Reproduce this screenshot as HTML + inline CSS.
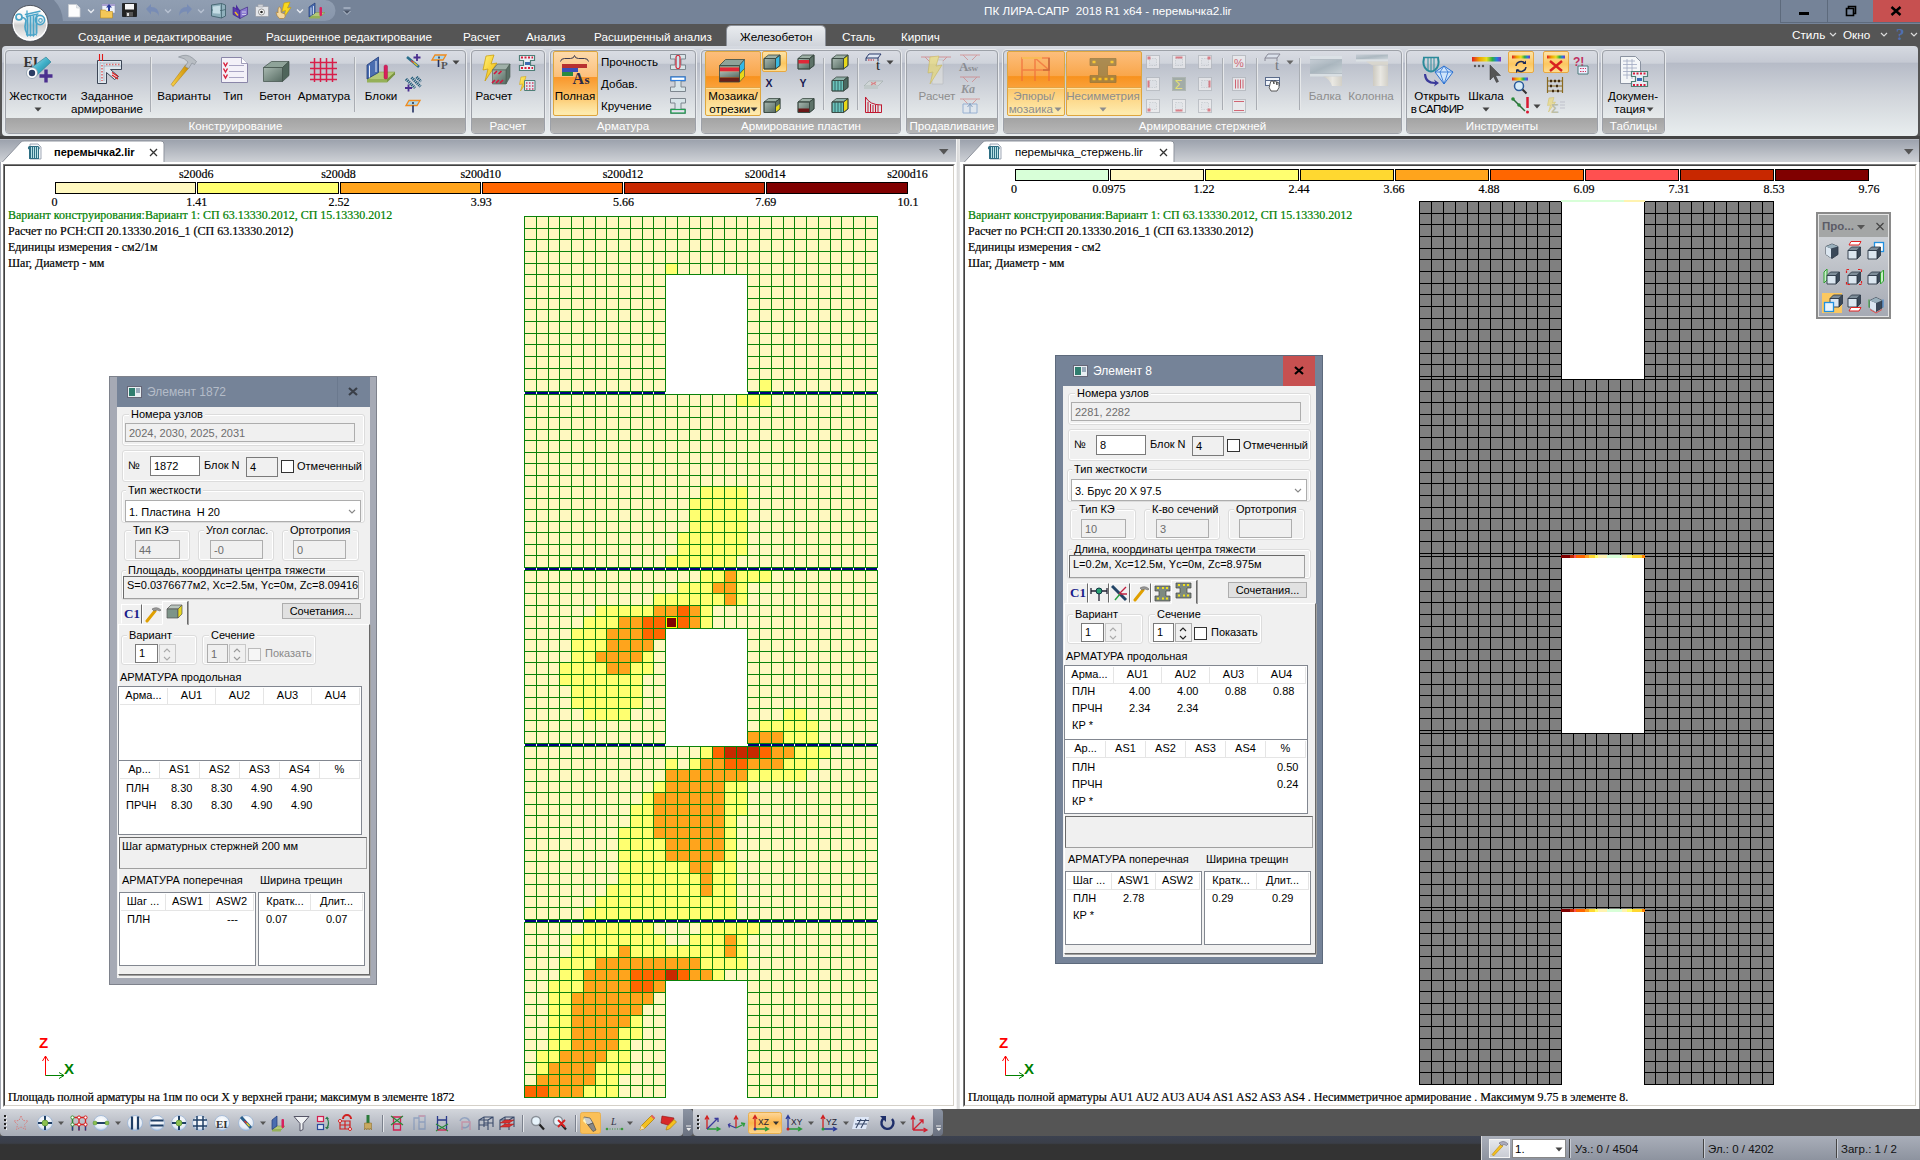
<!DOCTYPE html><html lang="ru"><head><meta charset="utf-8"><title>ПК ЛИРА-САПР</title><style>

html,body{margin:0;padding:0}
body{width:1920px;height:1160px;overflow:hidden;background:#555;position:relative;font-family:"Liberation Sans",sans-serif;font-size:12px;color:#000}
.abs{position:absolute}
.t{position:absolute;white-space:pre;line-height:14px}
.ser{font-family:"Liberation Serif",serif;font-size:12px;line-height:14px;-webkit-text-stroke:.2px}
#title{left:0;top:0;width:1920px;height:24px;background:#758398}
#menubar{left:0;top:24px;width:1920px;height:22px;background:#555}
.mt{position:absolute;top:30px;color:#fff;font-size:11.7px;line-height:14px;white-space:pre}
#ribbon{left:2px;top:46px;width:1916px;height:90px;border-radius:4px;background:linear-gradient(#d6dae1 0,#c5c9d3 18%,#b6bbc7 19%,#d0d4da 55%,#e9eeef 100%)}
.grp{position:absolute;top:50px;height:84px;border-radius:4px;box-sizing:border-box;border:1px solid #9da1a8;box-shadow:0 0 0 1px #e9ebee;background:linear-gradient(#d9dce3 0,#cfd3db 15%,#bcc1cc 16%,#d2d6dc 50%,#e6eaeb 80%);overflow:hidden}
.grp .gl{position:absolute;left:0;right:0;bottom:0;height:15px;background:linear-gradient(#a3a3a3,#b6b6b6);color:#fff;text-align:center;font-size:11.6px;line-height:15px}
.rl{position:absolute;font-size:11.6px;line-height:13px;text-align:center;white-space:pre;transform:translateX(-50%)}
.dis{color:#8d8d8d}
.hot{position:absolute;box-sizing:border-box;border:1px solid #dea63e;border-radius:2px;background:linear-gradient(#fddaab 0,#fbc07c 39%,#f9972c 40%,#fbb452 62%,#fdd88a 82%,#feeaac 96%)}
.hot3{position:absolute;box-sizing:border-box;border:1px solid #dea63e;border-radius:2px;background:linear-gradient(#fcbe7c 0,#f9a64a 38%,#f8921e 39%,#faa038 55%,#fcc468 56%,#fdd88a 75%,#feeaac 96%)}
.hot2{position:absolute;box-sizing:border-box;border:1px solid #e8a841;border-radius:2px;background:linear-gradient(#fde3a8,#fcc760 60%,#fddc90)}
.sep{position:absolute;width:1px;background:#a9adb3;box-shadow:1px 0 0 #e6e8ea}
.tabbar{position:absolute;top:139px;height:23px;background:linear-gradient(#9aa0ab,#ced1d6);box-shadow:inset 0 1px 0 #b3b7bf}
.lg{position:absolute;height:10px;border:1px solid #000;top:182px;box-sizing:content-box}


.dlg{position:absolute;width:268px;height:609px;box-sizing:border-box}
.dlg *{box-sizing:border-box}
.dlg .d{position:absolute;font-size:11px;line-height:13px;white-space:pre}
.dlg .gb{position:absolute;border:1px solid #dcdcdc;border-radius:3px;box-shadow:inset 0 0 0 1px #fff}
.dlg .gl{position:absolute;font-size:11px;line-height:13px;background:#f0f0f0;padding:0 2px;white-space:pre}
.dlg .fd{position:absolute;border:1px solid #adadad;background:#f0f0f0;font-size:11px;line-height:13px;color:#6d6d6d;white-space:pre;padding:3px 0 0 3px;overflow:hidden}
.dlg .fw{position:absolute;border:1px solid #7a7a7a;background:#fff;font-size:11px;line-height:13px;white-space:pre;padding:2px 0 0 3px;overflow:hidden}
.dlg .cb{position:absolute;width:13px;height:13px;border:1px solid #333;background:#fff}
.dlg .tb{position:absolute;background:#fff;border:1px solid #828790}
.dlg .th{position:absolute;top:1px;height:17px;border-right:1px solid #e5e5e5;border-bottom:1px solid #e5e5e5;font-size:11px;line-height:15px;text-align:center;white-space:pre}
.dlg .sp{position:absolute;width:17px;height:19px;border:1px solid #c8c8c8;background:#f0f0f0}

</style></head><body>
<div id="title" class="abs"></div>
<svg class="abs" style="left:44px;top:0" width="295" height="24"><defs><linearGradient id="pill" x1="0" y1="0" x2="0" y2="1"><stop offset="0" stop-color="#909eb2"/><stop offset="1" stop-color="#8896ab"/></linearGradient></defs><path d="M10 0H281a10.500 10.500 0 0 1 0 21H19A33 33 0 0 0 10 0z" fill="url(#pill)"/></svg>
<div class="t" style="left:984px;top:4px;color:#fff;font-size:11.7px">ПК ЛИРА-САПР  2018 R1 x64 - перемычка2.lir</div>
<div class="abs" style="left:1780px;top:0;width:47px;height:22px;border-left:1px solid #5d6a7c;box-sizing:border-box"></div>
<div class="abs" style="left:1827px;top:0;width:46px;height:22px;border-left:1px solid #5d6a7c;box-sizing:border-box"></div>
<div class="abs" style="left:1873px;top:0;width:47px;height:22px;background:#c75050"></div>
<div class="abs" style="left:1780px;top:22px;width:140px;height:1px;background:#5d6a7c"></div>
<div class="abs" style="left:1799px;top:12px;width:10px;height:3px;background:#000"></div>
<svg class="abs" style="left:1845px;top:5px" width="12" height="12"><path d="M3.5 3.5v-2h7v7h-2M1.5 3.5h7v7h-7z" fill="none" stroke="#000" stroke-width="1.6"/></svg>
<svg class="abs" style="left:1890px;top:6px" width="12" height="10"><path d="M1.5 1l9 8M10.5 1l-9 8" stroke="#000" stroke-width="2.4"/></svg>
<div id="menubar" class="abs"></div>
<div class="mt" style="left:78px">Создание и редактирование</div>
<div class="mt" style="left:266px">Расширенное редактирование</div>
<div class="mt" style="left:463px">Расчет</div>
<div class="mt" style="left:526px">Анализ</div>
<div class="mt" style="left:594px">Расширенный анализ</div>
<div class="mt" style="left:842px">Сталь</div>
<div class="mt" style="left:901px">Кирпич</div>
<div class="abs" style="left:727px;top:26px;width:98px;height:21px;border-radius:4px 4px 0 0;background:linear-gradient(#e9ecef,#cfd3da);box-shadow:0 0 0 1px #8b9099"></div>
<div class="mt" style="left:740px;color:#000">Железобетон</div>
<div class="mt" style="left:1792px;top:28px">Стиль</div>
<div class="mt" style="left:1843px;top:28px">Окно</div>
<svg class="abs" style="left:1829px;top:32px" width="8" height="6"><path d="M1 1l3 3 3-3" fill="none" stroke="#ddd" stroke-width="1.2"/></svg>
<svg class="abs" style="left:1880px;top:32px" width="8" height="6"><path d="M1 1l3 3 3-3" fill="none" stroke="#ddd" stroke-width="1.2"/></svg>
<svg class="abs" style="left:1910px;top:32px" width="8" height="6"><path d="M1 1l3 3 3-3" fill="none" stroke="#ddd" stroke-width="1.2"/></svg>
<div class="t" style="left:1896px;top:25px;color:#4f6fb0;font-size:17px;line-height:20px;font-weight:bold;font-family:'Liberation Serif',serif">?</div>
<div id="ribbon" class="abs"></div>
<div class="grp" style="left:5px;width:461px"><div class="gl">Конструирование</div></div>
<div class="grp" style="left:471px;width:74px"><div class="gl">Расчет</div></div>
<div class="grp" style="left:550px;width:146px"><div class="gl">Арматура</div></div>
<div class="grp" style="left:701px;width:200px"><div class="gl">Армирование пластин</div></div>
<div class="grp" style="left:906px;width:92px"><div class="gl">Продавливание</div></div>
<div class="grp" style="left:1003px;width:399px"><div class="gl">Армирование стержней</div></div>
<div class="grp" style="left:1406px;width:192px"><div class="gl">Инструменты</div></div>
<div class="grp" style="left:1602px;width:63px"><div class="gl">Таблицы</div></div>
<div class="hot" style="left:553px;top:51px;width:45px;height:65px"></div>
<div class="hot3" style="left:705px;top:51px;width:56px;height:65px"></div>
<div class="hot2" style="left:762px;top:51px;width:25px;height:21px"></div>
<div class="hot3" style="left:1007px;top:51px;width:58px;height:65px"></div>
<div class="hot3" style="left:1066px;top:51px;width:76px;height:65px"></div>
<div class="hot2" style="left:1508px;top:51px;width:26px;height:22px"></div>
<div class="hot2" style="left:1543px;top:51px;width:26px;height:22px"></div>
<div class="abs" style="left:706px;top:87px;width:54px;height:1px;background:#e3a343;box-shadow:0 1px 0 #fde0a0"></div>
<div class="abs" style="left:1008px;top:87px;width:56px;height:1px;background:#e3a343;box-shadow:0 1px 0 #fde0a0"></div>
<div class="abs" style="left:1067px;top:87px;width:74px;height:1px;background:#e3a343;box-shadow:0 1px 0 #fde0a0"></div>
<div class="sep" style="left:150px;top:57px;height:55px"></div>
<div class="sep" style="left:354px;top:57px;height:55px"></div>
<div class="sep" style="left:823px;top:58px;height:52px"></div>
<div class="sep" style="left:857px;top:58px;height:52px"></div>
<div class="sep" style="left:1222px;top:58px;height:52px"></div>
<div class="sep" style="left:1256px;top:58px;height:52px"></div>
<div class="sep" style="left:1299px;top:58px;height:52px"></div>
<div class="rl " style="left:38px;top:89px">Жесткости</div>
<div class="rl " style="left:107px;top:89px">Заданное
армирование</div>
<div class="rl " style="left:184px;top:89px">Варианты</div>
<div class="rl " style="left:233px;top:89px">Тип</div>
<div class="rl " style="left:275px;top:89px">Бетон</div>
<div class="rl " style="left:324px;top:89px">Арматура</div>
<div class="rl " style="left:381px;top:89px">Блоки</div>
<div class="rl " style="left:494px;top:89px">Расчет</div>
<div class="rl " style="left:575px;top:89px">Полная</div>
<div class="rl" style="left:601px;top:55px;transform:none;text-align:left">Прочность</div>
<div class="rl" style="left:601px;top:77px;transform:none;text-align:left">Добав.</div>
<div class="rl" style="left:601px;top:99px;transform:none;text-align:left">Кручение</div>
<div class="rl " style="left:733px;top:89px">Мозаика/
отрезки  </div>
<div class="rl" style="left:769px;top:77px;font-size:10.5px;font-weight:bold;color:#1a1a50">X</div><div class="rl" style="left:803px;top:77px;font-size:10.5px;font-weight:bold;color:#1a1a50">Y</div>
<div class="rl dis" style="left:937px;top:89px">Расчет</div>
<div class="rl dis" style="left:1034px;top:89px">Эпюры/
мозаика  </div>
<div class="rl dis" style="left:1103px;top:89px">Несимметрия</div>
<div class="rl dis" style="left:1325px;top:89px">Балка</div>
<div class="rl dis" style="left:1371px;top:89px">Колонна</div>
<div class="rl " style="left:1437px;top:89px">Открыть
<span style="letter-spacing:-.7px">в САПФИР</span></div>
<div class="rl " style="left:1486px;top:89px">Шкала</div>
<div class="rl " style="left:1633px;top:89px">Докумен-
тация  </div>
<svg class="abs" style="left:34px;top:107px" width="8" height="5"><path d="M0.5 0.5h7l-3.5 4z" fill="#444"/></svg>
<svg class="abs" style="left:452px;top:60px" width="8" height="5"><path d="M0.5 0.5h7l-3.5 4z" fill="#444"/></svg>
<svg class="abs" style="left:750px;top:107px" width="8" height="5"><path d="M0.5 0.5h7l-3.5 4z" fill="#333"/></svg>
<svg class="abs" style="left:886px;top:60px" width="8" height="5"><path d="M0.5 0.5h7l-3.5 4z" fill="#444"/></svg>
<svg class="abs" style="left:1054px;top:107px" width="8" height="5"><path d="M0.5 0.5h7l-3.5 4z" fill="#8d8d8d"/></svg>
<svg class="abs" style="left:1099px;top:107px" width="8" height="5"><path d="M0.5 0.5h7l-3.5 4z" fill="#8d8d8d"/></svg>
<svg class="abs" style="left:1286px;top:60px" width="8" height="5"><path d="M0.5 0.5h7l-3.5 4z" fill="#666"/></svg>
<svg class="abs" style="left:1482px;top:107px" width="8" height="5"><path d="M0.5 0.5h7l-3.5 4z" fill="#444"/></svg>
<svg class="abs" style="left:1533px;top:104px" width="8" height="5"><path d="M0.5 0.5h7l-3.5 4z" fill="#444"/></svg>
<svg class="abs" style="left:1646px;top:107px" width="8" height="5"><path d="M0.5 0.5h7l-3.5 4z" fill="#444"/></svg>
<svg class="abs" style="left:0;top:46px" width="1920" height="90" viewBox="0 46 1920 90" font-family="Liberation Sans,sans-serif"><defs><linearGradient id="tube" x1="0" y1="0" x2="1" y2="1"><stop offset="0" stop-color="#bfeef6"/><stop offset=".5" stop-color="#3fb0c8"/><stop offset="1" stop-color="#1c6d86"/></linearGradient><linearGradient id="gold" x1="0" y1="0" x2="1" y2="0"><stop offset="0" stop-color="#f8d24a"/><stop offset="1" stop-color="#c98a00"/></linearGradient><linearGradient id="cf" x1="0" y1="0" x2="1" y2="1"><stop offset="0" stop-color="#a9b9b1"/><stop offset="1" stop-color="#566b62"/></linearGradient><linearGradient id="bolt" x1="0" y1="0" x2="1" y2="1"><stop offset="0" stop-color="#fff27a"/><stop offset="1" stop-color="#f0b400"/></linearGradient><linearGradient id="rain" x1="0" y1="0" x2="1" y2="0"><stop offset="0" stop-color="#e02020"/><stop offset=".25" stop-color="#f0a000"/><stop offset=".5" stop-color="#e8e020"/><stop offset=".7" stop-color="#30b040"/><stop offset=".85" stop-color="#2080e0"/><stop offset="1" stop-color="#8030c0"/></linearGradient><linearGradient id="bm" x1="0" y1="0" x2="1" y2="1"><stop offset="0" stop-color="#c4ccd4"/><stop offset=".5" stop-color="#a4b2ba"/><stop offset="1" stop-color="#ccd6da"/></linearGradient><linearGradient id="colg" x1="0" y1="0" x2="1" y2="0"><stop offset="0" stop-color="#cfcabc"/><stop offset=".5" stop-color="#f2efe6"/><stop offset="1" stop-color="#d4d0c4"/></linearGradient><linearGradient id="steel" x1="0" y1="0" x2="0" y2="1"><stop offset="0" stop-color="#f2f4f6"/><stop offset=".5" stop-color="#b8c0c8"/><stop offset="1" stop-color="#e6e9ec"/></linearGradient></defs><text x="23.500" y="67" font-family="Liberation Serif,serif" font-weight="bold" font-size="14" fill="#333">EI</text><path d="M28 70L46 57l5 5L34 78z" fill="url(#tube)" stroke="#2a7c92" stroke-width=".6"/><circle cx="32" cy="73" r="5.500" fill="#fff" stroke="#8a9aa8" stroke-width=".8"/><circle cx="32" cy="73" r="3.200" fill="#2b3d63"/><path d="M39.5 76h13.0M46 69.5v13.0" stroke="#4b2f8f" stroke-width="3.4" fill="none"/><path d="M98 60h24v9h-12l8 6v-4l-8-2v16h-12z" fill="none"/><path d="M97.500 60.500h24v9h-11l8 7-4 3-8-7v11h-9z" fill="#dfe7ee" stroke="#3c4656" stroke-width="1"/><path d="M100 62v20M104 63v18M100 63h20M104 66h17" stroke="#9aa6b4" stroke-width=".7" fill="none"/><path d="M102 65v16M106 64.500h14" stroke="#e06a6a" stroke-width="1.600" stroke-dasharray="1.500 1.500" fill="none"/><path d="M99.500 54v7M102.500 54v7M112 75l6 4M112 72.500l6 4" stroke="#e01818" stroke-width="1.100" fill="none"/><path d="M173 86.500l-1.800-2.200L185.500 65l3.600 2.600z" fill="url(#gold)" stroke="#b07800" stroke-width=".5"/><path d="M185 66.500l3-4.500q-3-4-9.500-5 8-4 14 1l4 3.500-2 3-2.500-1.500-3.500 5.500z" fill="#b9bec4" stroke="#80868e" stroke-width=".6"/><path d="M221.500 57.500h20l6 6v19h-26z" fill="#f3f1f8" stroke="#8a86a8" stroke-width="1"/><path d="M241.500 57.500v6h6" fill="#fff" stroke="#8a86a8" stroke-width=".8"/><path d="M223.500 62.5l2 3.500 2-3.500" fill="none" stroke="#d8203c" stroke-width="1.400"/><path d="M229 65.5h15" stroke="#a9a6c4" stroke-width="1"/><path d="M223.500 68.5l2 3.500 2-3.500" fill="none" stroke="#d8203c" stroke-width="1.400"/><path d="M229 71.5h15" stroke="#a9a6c4" stroke-width="1"/><path d="M223.500 74.5l2 3.500 2-3.500" fill="none" stroke="#d8203c" stroke-width="1.400"/><path d="M229 77.5h15" stroke="#a9a6c4" stroke-width="1"/><path d="M263.500 67.500l8-6h17.500l-6.500 6z" fill="#8fa399" stroke="#3d4d46" stroke-width=".7"/><path d="M282.500 67.500l6.500-6v14l-6.500 6z" fill="#4f655b" stroke="#3d4d46" stroke-width=".7"/><path d="M263.500 67.500h19v14h-19z" fill="url(#cf)" stroke="#3d4d46" stroke-width=".7"/><path d="M314.500 58v24M320.500 58v24M326.500 58v24M332.500 58v24M310 62.500h27M310 68.500h27M310 74.500h27M310 79.500h27" stroke="#d81e4a" stroke-width="1.500" fill="none"/><path d="M367 79l10-7h18l-8 9z" fill="#b3c878" stroke="#7a9440" stroke-width=".5"/><path d="M367 79h20v3.500h-20z" fill="#95b058"/><path d="M387 79l8-7v2.500l-8 8z" fill="#7a9440"/><path d="M367 65l11.500-8v15.500L367 79z" fill="#4a6db0" stroke="#1f3a7a" stroke-width=".8"/><path d="M369.500 65.500v12M376 61v11" stroke="#e8eef8" stroke-width="1"/><rect x="384" y="65" width="3.500" height="14" rx="1.500" fill="#d8205c" stroke="#a01040" stroke-width=".4"/><path d="M407 57l12 10" stroke="#2a6f8c" stroke-width="2.600"/><path d="M412.500 61.500l5 4.200" stroke="#e8c020" stroke-width="1.200"/><path d="M411 60.500l2.500 2" stroke="#e04040" stroke-width="1.200"/><path d="M413.5 57.5h7.0M417 54.0v7.0" stroke="#4b2f8f" stroke-width="1.8" fill="none"/><path d="M406 79l9 9M411.500 77.500l9 9M416.500 77l4.500 4.500" stroke="#1f5a78" stroke-width="3" stroke-dasharray="1.200 .8"/><path d="M405.0 88h7.0M408.5 84.5v7.0" stroke="#4b2f8f" stroke-width="1.8" fill="none"/><path d="M406 105.5l3-5h11l-3 5z" fill="#a9d6ee" stroke="#f08a1c" stroke-width="1.3"/><path d="M413 102v2" stroke="#223" stroke-width="1.4"/><path d="M413 105.500v7" stroke="#223060" stroke-width="1.600"/><path d="M432 60.0l3-5h11l-3 5z" fill="#a9d6ee" stroke="#f08a1c" stroke-width="1.3"/><path d="M439 56.5v2" stroke="#223" stroke-width="1.4"/><path d="M438.500 60v7" stroke="#223060" stroke-width="1.600"/><text x="441" y="69" font-family="Liberation Serif,serif" font-size="11" font-weight="bold" fill="#555">P</text><path d="M486 56l8-1-3 9 6-1-12 18 3-12-5 1z" fill="url(#bolt)" stroke="#c89a00" stroke-width=".7"/><path d="M492.500 70l5-6h12.500l-4 6z" fill="#9fb0a8" stroke="#4a5a52" stroke-width=".6"/><path d="M506 70l4-6v13l-4 7z" fill="#5a7066" stroke="#4a5a52" stroke-width=".6"/><path d="M492.500 70h13.500v14h-13.500z" fill="url(#cf)" stroke="#4a5a52" stroke-width=".6"/><path d="M494 74l3-3M498.500 74l3-3M492 83l3-3M496 83l3-3M500 83l3-3" stroke="#d01840" stroke-width="1.700"/><path d="M519.500 55.500h15v5h-4v5h4v5h-15v-5h4v-5h-4z" fill="#e8eef4" stroke="#4f7f78" stroke-width="1.200"/><path d="M521 57.500h12M521 68h12" stroke="#d81e3c" stroke-width="2" stroke-dasharray="2 1.500"/><path d="M525 62h5v3h-5z" fill="#3a6ab0"/><path d="M521 77l5-.500-1.500 5 3-.500-7 10 2-7-3 .500z" fill="url(#bolt)" stroke="#c89a00" stroke-width=".5"/><path d="M524.500 80.500h10.500v10h-10.500z" fill="#dfe6f0" stroke="#4f7f78" stroke-width="1"/><path d="M526 83h8M526 86h8M526 89h8" stroke="#d04060" stroke-width="1.400" stroke-dasharray="1.500 1.500"/><path d="M560.500 61.500q.500-3 4-3h6q3.500 0 4-3 .500 3 4 3h6q3.500 0 4 3" fill="none" stroke="#3a3a50" stroke-width="1"/><rect x="562" y="64" width="25" height="4" fill="#b83030"/><rect x="562" y="68" width="16" height="4" fill="#3850b8"/><rect x="562" y="72" width="11" height="4" fill="#2a8a40"/><text x="572.500" y="83.500" font-family="Liberation Serif,serif" font-weight="bold" font-size="16" fill="#2a2a48">A</text><text x="584.500" y="83.500" font-family="Liberation Serif,serif" font-weight="bold" font-size="13" fill="#2a2a48">s</text><path d="M670.5 54.5h15v4.500h-4.500v6h4.500v4.500h-15v-4.500h4.500v-6h-4.500z" fill="#d8e4e8" stroke="#7d868e" stroke-width="1"/><rect x="676" y="55.5" width="4" height="13" rx="1.800" fill="#c8e8f0" stroke="#d02030" stroke-width="1.200"/><path d="M670.5 76.5h15v4.500h-4.500v6h4.500v4.500h-15v-4.500h4.500v-6h-4.500z" fill="#d8e4e8" stroke="#7d868e" stroke-width="1"/><rect x="671" y="77" width="14" height="3.500" fill="#fff" stroke="#3080e0" stroke-width="1.200"/><path d="M670.5 98.5h15v4.500h-4.500v6h4.500v4.500h-15v-4.500h4.500v-6h-4.500z" fill="#d8e4e8" stroke="#7d868e" stroke-width="1"/><rect x="671" y="109.5" width="14" height="3.500" fill="#e8e0f0" stroke="#20a050" stroke-width="1.200"/><path d="M719.500 65.500l6-6h19l-5 6z" fill="#8fa399" stroke="#3a4a42" stroke-width=".8"/><path d="M739.500 65.500l5-6v9l-5 5.500z" fill="#30b8e8" stroke="#3a4a42" stroke-width=".6"/><path d="M739.500 74l5-5.500v8l-5 5.500z" fill="#e8d818" stroke="#3a4a42" stroke-width=".6"/><path d="M719.500 65.500h20v2h-20z" fill="#7f958a"/><path d="M719.500 67.500h20v4h-20z" fill="#e02838"/><path d="M719.500 71.500h20v6h-20z" fill="url(#cf)"/><path d="M719.500 77.500h20v4.500h-20z" fill="#6a2018"/><path d="M719.500 65.500h20v16.500h-20z" fill="none" stroke="#3a4a42" stroke-width=".8"/><g opacity="1" stroke="#3a4a42" stroke-width=".8" stroke-linejoin="round"><path d="M764.0 58.5l4.5 -3.5h11.5l-4.5 3.5z" fill="#9db0a6"/><path d="M775.5 58.5l4.5 -3.5v10.5l-4.5 3.5z" fill="#38b8e0"/><path d="M764.0 58.5h11.5v10.5h-11.5z" fill="url(#cf)"/><path d="M764.0 58.5h11.5v10.5h-11.5zM775.5 58.5l4.5 -3.5v10.5l-4.5 3.5" fill="none"/></g><g opacity="1" stroke="#3a4a42" stroke-width=".8" stroke-linejoin="round"><path d="M798.0 58.5l4.5 -3.5h11.5l-4.5 3.5z" fill="#9db0a6"/><path d="M809.5 58.5l4.5 -3.5v10.5l-4.5 3.5z" fill="#5d7268"/><path d="M798.0 58.5h11.5v10.5h-11.5z" fill="url(#cf)"/><rect x="798.0" y="58.5" width="11.500" height="3.500" fill="#e02838" stroke="none" transform="translate(0,1.500)"/><path d="M798.0 58.5h11.5v10.5h-11.5zM809.5 58.5l4.5 -3.5v10.5l-4.5 3.5" fill="none"/></g><g opacity="1" stroke="#3a4a42" stroke-width=".8" stroke-linejoin="round"><path d="M764.0 102.0l4.5 -3.5h11.5l-4.5 3.5z" fill="#9db0a6"/><path d="M775.5 102.0l4.5 -3.5v10.5l-4.5 3.5z" fill="#5d7268"/><path d="M775.5 107.25l4.5 -3.5v5.25l-4.5 3.5z" fill="#e8d818" stroke="none"/><path d="M764.0 102.0h11.5v10.5h-11.5z" fill="url(#cf)"/><path d="M764.0 102.0h11.5v10.5h-11.5zM775.5 102.0l4.5 -3.5v10.5l-4.5 3.5" fill="none"/></g><g opacity="1" stroke="#3a4a42" stroke-width=".8" stroke-linejoin="round"><path d="M798.0 102.0l4.5 -3.5h11.5l-4.5 3.5z" fill="#9db0a6"/><path d="M809.5 102.0l4.5 -3.5v10.5l-4.5 3.5z" fill="#5d7268"/><path d="M798.0 102.0h11.5v10.5h-11.5z" fill="url(#cf)"/><rect x="798.0" y="102.0" width="11.500" height="3.500" fill="#6a1818" stroke="none" transform="translate(0,6.500)"/><path d="M798.0 102.0h11.5v10.5h-11.5zM809.5 102.0l4.5 -3.5v10.5l-4.5 3.5" fill="none"/></g><g opacity="1" stroke="#3a4a42" stroke-width=".8" stroke-linejoin="round"><path d="M832.0 58.5l4.5 -3.5h11.5l-4.5 3.5z" fill="#9db0a6"/><path d="M843.5 58.5l4.5 -3.5v10.5l-4.5 3.5z" fill="#e8d818"/><path d="M832.0 58.5h11.5v10.5h-11.5z" fill="url(#cf)"/><path d="M832.0 58.5h11.5v10.5h-11.5zM843.5 58.5l4.5 -3.5v10.5l-4.5 3.5" fill="none"/></g><g opacity="1" stroke="#3a4a42" stroke-width=".8" stroke-linejoin="round"><path d="M832.0 80.5l4.5 -3.5h11.5l-4.5 3.5z" fill="#8fb0a8"/><path d="M843.5 80.5l4.5 -3.5v10.5l-4.5 3.5z" fill="#4a6a62"/><path d="M832.0 80.5h11.5v10.5h-11.5z" fill="#6cc4bc"/><path d="M832.0 80.5m3 0v10.500m3 -10.500v10.500m3 -10.500v10.500" stroke="#2a5a58" stroke-width=".9" fill="none"/><path d="M832.0 80.5h11.5v10.5h-11.5zM843.5 80.5l4.5 -3.5v10.5l-4.5 3.5" fill="none"/></g><g opacity="1" stroke="#3a4a42" stroke-width=".8" stroke-linejoin="round"><path d="M832.0 102.0l4.5 -3.5h11.5l-4.5 3.5z" fill="#8fb0a8"/><path d="M843.5 102.0l4.5 -3.5v10.5l-4.5 3.5z" fill="#e8d818"/><path d="M832.0 102.0h11.5v10.5h-11.5z" fill="#6cc4bc"/><path d="M832.0 102.0m3 0v10.500m3 -10.500v10.500m3 -10.500v10.500" stroke="#2a5a58" stroke-width=".9" fill="none"/><path d="M832.0 102.0h11.5v10.5h-11.5zM843.5 102.0l4.5 -3.5v10.5l-4.5 3.5" fill="none"/></g><path d="M866 58l3-4h12l-3 4z" fill="#dfe8f4" stroke="#2a3a6a" stroke-width="1"/><path d="M866 58v3M878 58v3" stroke="#2a3a6a"/><path d="M868 60h6" stroke="#d02030" stroke-width="1.200" stroke-dasharray="1.500 1"/><text x="876" y="70" font-family="Liberation Serif,serif" font-size="15" fill="#222">t</text><g opacity=".6"><path d="M864 86l5-5h14l-5 5z" fill="#d4dcd8" stroke="#8a9a94" stroke-width=".7"/><path d="M864 86h14v3h-14z" fill="#b8c4c0"/><path d="M871 82.500l5 2M876 82l-5 3" stroke="#e05050" stroke-width="1.200"/></g><path d="M865.500 97v15.500h16v-8" fill="none" stroke="#c01830" stroke-width="1"/><path d="M865.500 97q4 8 16 8" fill="none" stroke="#c01830" stroke-width="1"/><path d="M868 102v10M870.500 104v8M873 105v7M875.500 105v7M878 105v7" stroke="#c01830" stroke-width="1"/><g opacity=".55"><path d="M921 57h30M925 57l8 8M947 57l-8 8" stroke="#d06060" stroke-width="1" fill="none"/><path d="M932 60h11v24h-11z" fill="#e4e4e0" stroke="#aaa" stroke-width=".6"/><path d="M930 57l9-1-3 10 6-1-12 19 3-12-5 1z" fill="#f4e060" stroke="#c8a800" stroke-width=".6"/></g><g opacity=".5"><path d="M960 55h20M963 55l5 5M977 55l-5 5" stroke="#d06060" stroke-width="1" fill="none"/><text x="959" y="71" font-family="Liberation Serif,serif" font-size="13" font-weight="bold" fill="#555">A</text><text x="968" y="71" font-family="Liberation Serif,serif" font-size="9" font-weight="bold" fill="#555">sw</text><path d="M960 77h20M963 77l5 5M977 77l-5 5" stroke="#d06060" stroke-width="1" fill="none"/><text x="961" y="93" font-family="Liberation Serif,serif" font-size="12" font-style="italic" font-weight="bold" fill="#555">Ka</text><path d="M960 99h20M963 99l5 5M977 99l-5 5" stroke="#d06060" stroke-width="1" fill="none"/><path d="M963 104h14v9h-14z" fill="#dfe8f4" stroke="#5080c0" stroke-width="1"/><path d="M970 103v10M967.500 107l2.500-3 2.500 3" stroke="#3060a0" stroke-width="1" fill="none"/></g><g opacity=".65"><path d="M1022 81V58h27v23M1022 70h27M1035 58v23M1035 58l14 12" fill="none" stroke="#f06838" stroke-width="1.600"/><path d="M1022 58h20" stroke="#f8d050" stroke-width="1.600"/><path d="M1049 58v12h-6" stroke="#b04828" stroke-width="1.600" fill="none"/></g><g opacity=".7"><path d="M1090 58.500h26v7h-8.500v10h8.500v7h-26v-7h8.500v-10h-8.500z" fill="#8a7a48" stroke="#7a6a38" stroke-width=".8"/><path d="M1092.500 79h3M1098.500 79h3M1104.500 79h3M1110.500 79h3M1092.500 62h3M1110.500 62h3" stroke="#f8d020" stroke-width="2.400"/></g><g opacity=".75"><rect x="1146.5" y="55.5" width="13" height="13" fill="#ececee" stroke="#b4b8be"/><rect x="1149.5" y="58.5" width="7" height="7" fill="#e4e6ea" stroke="#c2c6cc" stroke-width=".8" stroke-dasharray="1.500 1"/><rect x="1147.5" y="56.5" width="3" height="3" fill="#d8606a"/></g><g opacity=".75"><rect x="1172.5" y="55.5" width="13" height="13" fill="#ececee" stroke="#b4b8be"/><rect x="1175.5" y="58.5" width="7" height="7" fill="#e4e6ea" stroke="#c2c6cc" stroke-width=".8" stroke-dasharray="1.500 1"/><rect x="1175.5" y="56.5" width="7" height="2" fill="#d8606a"/></g><g opacity=".75"><rect x="1198.5" y="55.5" width="13" height="13" fill="#ececee" stroke="#b4b8be"/><rect x="1201.5" y="58.5" width="7" height="7" fill="#e4e6ea" stroke="#c2c6cc" stroke-width=".8" stroke-dasharray="1.500 1"/><rect x="1207.5" y="56.5" width="3" height="3" fill="#d8606a"/></g><g opacity=".75"><rect x="1146.5" y="77.5" width="13" height="13" fill="#ececee" stroke="#b4b8be"/><rect x="1149.5" y="80.5" width="7" height="7" fill="#e4e6ea" stroke="#c2c6cc" stroke-width=".8" stroke-dasharray="1.500 1"/><rect x="1147.5" y="80.5" width="2" height="7" fill="#d8606a"/></g><g opacity=".75"><rect x="1198.5" y="77.5" width="13" height="13" fill="#ececee" stroke="#b4b8be"/><rect x="1201.5" y="80.5" width="7" height="7" fill="#e4e6ea" stroke="#c2c6cc" stroke-width=".8" stroke-dasharray="1.500 1"/><rect x="1208.5" y="80.5" width="2" height="7" fill="#d8606a"/></g><g opacity=".75"><rect x="1146.5" y="99.5" width="13" height="13" fill="#ececee" stroke="#b4b8be"/><rect x="1149.5" y="102.5" width="7" height="7" fill="#e4e6ea" stroke="#c2c6cc" stroke-width=".8" stroke-dasharray="1.500 1"/><rect x="1147.5" y="108.5" width="3" height="3" fill="#d8606a"/></g><g opacity=".75"><rect x="1172.5" y="99.5" width="13" height="13" fill="#ececee" stroke="#b4b8be"/><rect x="1175.5" y="102.5" width="7" height="7" fill="#e4e6ea" stroke="#c2c6cc" stroke-width=".8" stroke-dasharray="1.500 1"/><rect x="1175.5" y="109.5" width="7" height="2" fill="#d8606a"/></g><g opacity=".75"><rect x="1198.5" y="99.5" width="13" height="13" fill="#ececee" stroke="#b4b8be"/><rect x="1201.5" y="102.5" width="7" height="7" fill="#e4e6ea" stroke="#c2c6cc" stroke-width=".8" stroke-dasharray="1.500 1"/><rect x="1207.5" y="108.5" width="3" height="3" fill="#d8606a"/></g><g opacity=".8"><rect x="1172.500" y="77.500" width="13" height="13" fill="#98a49c" stroke="#a8b0aa"/><text x="1174.500" y="89" font-size="13" fill="#e8e060">Σ</text></g><g opacity=".8"><rect x="1232.500" y="55.500" width="13" height="13" fill="#ececee" stroke="#b4b8be"/><text x="1234" y="66.500" font-size="11" fill="#d04858">%</text><rect x="1232.500" y="77.500" width="13" height="13" fill="#ececee" stroke="#b4b8be"/><path d="M1235.500 79.500v9M1238 79.500v9M1240.500 79.500v9M1243 79.500v9" stroke="#d04858" stroke-width="1"/><rect x="1232.500" y="99.500" width="13" height="13" fill="#ececee" stroke="#b4b8be"/><path d="M1234 101.500h10M1234 110.500h10" stroke="#d04858" stroke-width="1"/></g><g opacity=".6"><path d="M1265 58l3-4h12l-3 4z" fill="#dfe8f4" stroke="#556" stroke-width="1"/><path d="M1265 58v3M1277 58v3" stroke="#556"/><text x="1275" y="70" font-family="Liberation Serif,serif" font-size="15" fill="#444">t</text></g><rect x="1265.500" y="77.500" width="14" height="8" fill="#eef2f8" stroke="#5a6a8a"/><path d="M1265.500 80.500h14" stroke="#5a6a8a"/><path d="M1270 84q-2 4 1 7h6q3-3 2-8l-2-1v3l-1-4-2 0v3l-1-3-2 0z" fill="#fff" stroke="#333" stroke-width=".8"/><g opacity=".8"><rect x="1310" y="56" width="32" height="3.500" fill="#dde4e8"/><rect x="1310" y="59.500" width="32" height="14" fill="url(#bm)"/><rect x="1310" y="73.500" width="32" height="3" fill="#dfe5e8"/><path d="M1323 76.500h19v9.500h-10q-2-7-9-9.500z" fill="url(#colg)"/><path d="M1310 59.500h32M1310 73.500h32" stroke="#9aa8b0" stroke-width=".6"/></g><g opacity=".8"><rect x="1356" y="54.500" width="32" height="5" fill="url(#bm)"/><rect x="1356" y="59.500" width="32" height="2" fill="#dfe5e8"/><path d="M1366 61.500h22v4h-15q-3-1-7-4z" fill="#dcd8cc"/><rect x="1373" y="65.500" width="15" height="20.500" fill="url(#colg)"/></g><path d="M1424 58q-2 8 3 12 4 3 8 0 5-4 3-12" fill="none" stroke="#2a8a9a" stroke-width="2"/><path d="M1428 58v12M1431 58v13M1434 58v12" stroke="#2a8a9a" stroke-width="1"/><path d="M1423 57.500h16" stroke="#2a8a9a" stroke-width="1.500"/><path d="M1426 74q1 8 9 8l-1-2.500 5 3.500-5 3.500 1-2.500q-11 0-11-10z" fill="#3a3a9a"/><path d="M1444 66l9 6-9 12-9-12z" fill="#cfe4fa" stroke="#2a70d0" stroke-width="1"/><path d="M1435 72h18M1444 66l-4 6 4 12 4-12z" fill="none" stroke="#2a70d0" stroke-width=".8"/><rect x="1472" y="57" width="29" height="4.500" fill="url(#rain)"/><circle cx="1475" cy="66" r="1.200" fill="#555"/><circle cx="1479" cy="66" r="1.200" fill="#555"/><circle cx="1483" cy="66" r="1.200" fill="#555"/><path d="M1490 65v15l3.500-3.500 3 6 2-1-3-6 5 0z" fill="#555" stroke="#333" stroke-width=".5"/><rect x="1512" y="55.500" width="18" height="3" fill="url(#rain)"/><path d="M1516 66a5 5 0 0 1 9-2.500M1526 67a5 5 0 0 1-9 2.500" fill="none" stroke="#1a2a5a" stroke-width="1.500"/><path d="M1526 60.500v3.500h-3.500zM1516 73v-3.500h3.500z" fill="#1a2a5a"/><rect x="1547" y="55.500" width="18" height="3" fill="url(#rain)"/><path d="M1550 61l12 10M1562 61l-12 10" stroke="#d82020" stroke-width="2.400"/><text x="1573" y="66" font-size="12" font-weight="bold" fill="#c03060">?!</text><path d="M1578 66h10v8h-10z" fill="#eef" stroke="#4a7a7a" stroke-width="1"/><path d="M1580 68.500h6M1580 71.500h6" stroke="#d04060" stroke-width="1.200" stroke-dasharray="1.500 1"/><rect x="1512" y="77.500" width="16" height="3" fill="url(#rain)"/><circle cx="1519" cy="86" r="4.500" fill="#d8ecf8" stroke="#2a5a9a" stroke-width="1.500"/><path d="M1522.500 89.500l4 4" stroke="#333" stroke-width="2"/><path d="M1547.500 77v16M1562.500 77v16M1547 81h16M1547 86h16M1547 91h16" stroke="#8a6a20" stroke-width="1.200" fill="none"/><path d="M1550 81h2M1554 81h2M1558 81h2M1550 86h2M1556 86h2M1552 91h2M1557 91h2" stroke="#402a10" stroke-width="2.400"/><path d="M1513 99l12 12" stroke="#2a6a3a" stroke-width="1.500"/><circle cx="1513" cy="99" r="1.800" fill="#2a8a3a"/><circle cx="1519" cy="105" r="1.800" fill="#2a8a3a"/><path d="M1527.500 97v11" stroke="#d81830" stroke-width="2.500"/><circle cx="1527.500" cy="112" r="1.500" fill="#d81830"/><g opacity=".55"><path d="M1549 98l5-.500-1.500 5 3-.500-7 10 2-7-3 .500z" fill="#f0d860" stroke="#c8a800" stroke-width=".5"/><text x="1551" y="113" font-size="13" font-weight="bold" fill="#a0a070">Σ</text><path d="M1560 102h5M1560 105h5M1560 108h5" stroke="#aab" stroke-width="1"/></g><path d="M1620.500 56.500h15l5 5v22h-20z" fill="#f4f6f8" stroke="#8a92a0" stroke-width="1"/><path d="M1623 61h12M1623 64.500h14M1623 68h14M1623 71.500h14M1623 75h10M1627 59v20M1632 59v20" stroke="#a0a8c0" stroke-width=".8"/><path d="M1631.500 71.500h16v5h-4v5h4v5h-16v-5h4v-5h-4z" fill="#e8eef4" stroke="#4f7f78" stroke-width="1.200"/><path d="M1633 73.500h13M1633 85h13" stroke="#d81e3c" stroke-width="2" stroke-dasharray="2 1.500"/><path d="M1637 78h5v3h-5z" fill="#3a6ab0"/></svg>
<div class="tabbar" style="left:0;width:956px"></div>
<div class="tabbar" style="left:960px;width:959px"></div><div class="abs" style="left:0;top:136px;width:1920px;height:3px;background:#444"></div>
<div class="abs" style="left:956px;top:139px;width:4px;height:970px;background:linear-gradient(90deg,#fff,#d9d9d9 40%,#e8e8e8)"></div>
<svg class="abs" style="left:0;top:139px" width="170" height="25"><path d="M1 24.500L21 3Q22 2 24 2H161Q164 2 164 5V24.500z" fill="#fff" stroke="#8e939d" stroke-width="1"/><rect x="0" y="23" width="170" height="2" fill="#fff"/></svg>
<svg class="abs" style="left:960px;top:139px" width="220" height="25"><path d="M3 24.500L23 3Q24 2 26 2H211Q214 2 214 5V24.500z" fill="#fff" stroke="#8e939d" stroke-width="1"/><rect x="0" y="23" width="220" height="2" fill="#fff"/></svg>
<svg class="abs" style="left:27px;top:143px" width="16" height="18" viewBox="0 0 16 18" ><path d="M3 1h8l3 3v12H3z" fill="#f4f6f8" stroke="#8a96a4" stroke-width=".8"/><path d="M2 3c-1.5 1-1.5 3 0 3.5V16h10V6.500c1-.5 1-3-1-3.500z" fill="#2e6f84"/><path d="M4.500 4v11M6.500 4v11M8.500 4v11M10.500 4v11" stroke="#dff" stroke-width=".8"/></svg>
<svg class="abs" style="left:987px;top:143px" width="16" height="18" viewBox="0 0 16 18" ><path d="M3 1h8l3 3v12H3z" fill="#f4f6f8" stroke="#8a96a4" stroke-width=".8"/><path d="M2 3c-1.5 1-1.5 3 0 3.5V16h10V6.500c1-.5 1-3-1-3.500z" fill="#2e6f84"/><path d="M4.500 4v11M6.500 4v11M8.500 4v11M10.500 4v11" stroke="#dff" stroke-width=".8"/></svg>
<div class="t" style="left:54px;top:145px;font-size:11px;font-weight:bold">перемычка2.lir</div>
<div class="t" style="left:1015px;top:145px;font-size:11.5px">перемычка_стержень.lir</div>
<svg class="abs" style="left:149px;top:148px" width="9" height="9"><path d="M1 1l7 7M8 1l-7 7" stroke="#333" stroke-width="1.3"/></svg>
<svg class="abs" style="left:1159px;top:148px" width="9" height="9"><path d="M1 1l7 7M8 1l-7 7" stroke="#333" stroke-width="1.3"/></svg>
<svg class="abs" style="left:939px;top:149px" width="10" height="6"><path d="M0 0h9.500l-4.750 5.500z" fill="#555"/></svg>
<svg class="abs" style="left:1904px;top:149px" width="10" height="6"><path d="M0 0h9.500l-4.750 5.500z" fill="#555"/></svg>
<div class="abs" style="left:0px;top:162px;width:956px;height:947px;background:#fff;box-sizing:border-box;border-left:1px solid #a3a7b0"><div class="abs" style="left:2px;top:2px;right:1px;bottom:2px;border:1px solid;border-color:#7a7a7a #fff #fff #7a7a7a"><div class="abs" style="left:0;top:0;right:0;bottom:0;border:1px solid;border-color:#404040 #d4d0c8 #d4d0c8 #404040"></div></div></div>
<div class="abs" style="left:960px;top:162px;width:960px;height:947px;background:#fff;box-sizing:border-box;border-left:1px solid #fff;border-right:1px solid #a0a0a0"><div class="abs" style="left:2px;top:2px;right:2px;bottom:2px;border:1px solid;border-color:#7a7a7a #fff #fff #7a7a7a"><div class="abs" style="left:0;top:0;right:0;bottom:0;border:1px solid;border-color:#404040 #d4d0c8 #d4d0c8 #404040"></div></div></div>
<div class="abs" style="left:55px;top:182px;width:139px;height:10px;border:1px solid #000;background:#FFF8C0"></div>
<div class="abs" style="left:197px;top:182px;width:140px;height:10px;border:1px solid #000;background:#FFFF70"></div>
<div class="abs" style="left:340px;top:182px;width:139px;height:10px;border:1px solid #000;background:#FFA41C"></div>
<div class="abs" style="left:482px;top:182px;width:139px;height:10px;border:1px solid #000;background:#FF6600"></div>
<div class="abs" style="left:624px;top:182px;width:139px;height:10px;border:1px solid #000;background:#C82800"></div>
<div class="abs" style="left:766px;top:182px;width:140px;height:10px;border:1px solid #000;background:#800000"></div>
<div class="t ser" style="left:196.25px;top:167px;transform:translateX(-50%);color:#000">s200d6</div>
<div class="t ser" style="left:338.5px;top:167px;transform:translateX(-50%);color:#000">s200d8</div>
<div class="t ser" style="left:480.75px;top:167px;transform:translateX(-50%);color:#000">s200d10</div>
<div class="t ser" style="left:623.0px;top:167px;transform:translateX(-50%);color:#000">s200d12</div>
<div class="t ser" style="left:765.25px;top:167px;transform:translateX(-50%);color:#000">s200d14</div>
<div class="t ser" style="left:907.5px;top:167px;transform:translateX(-50%);color:#000">s200d16</div>
<div class="t ser" style="left:54.5px;top:195px;transform:translateX(-50%);color:#000">0</div>
<div class="t ser" style="left:196.75px;top:195px;transform:translateX(-50%);color:#000">1.41</div>
<div class="t ser" style="left:339.0px;top:195px;transform:translateX(-50%);color:#000">2.52</div>
<div class="t ser" style="left:481.25px;top:195px;transform:translateX(-50%);color:#000">3.93</div>
<div class="t ser" style="left:623.5px;top:195px;transform:translateX(-50%);color:#000">5.66</div>
<div class="t ser" style="left:765.75px;top:195px;transform:translateX(-50%);color:#000">7.69</div>
<div class="t ser" style="left:908.0px;top:195px;transform:translateX(-50%);color:#000">10.1</div>
<div class="t ser" style="left:8px;top:208px;color:#008000">Вариант конструирования:Вариант 1: СП 63.13330.2012, СП 15.13330.2012</div>
<div class="t ser" style="left:8px;top:224px;color:#000">Расчет по РСН:СП 20.13330.2016_1 (СП 63.13330.2012)</div>
<div class="t ser" style="left:8px;top:240px;color:#000">Единицы измерения - см2/1м</div>
<div class="t ser" style="left:8px;top:256px;color:#000">Шаг, Диаметр - мм</div>
<div class="t ser" style="left:8px;top:1090px;letter-spacing:-0.07px;color:#000">Площадь полной арматуры на 1пм по оси X у верхней грани; максимум в элементе 1872</div>
<div class="abs" style="left:1015px;top:169px;width:92px;height:10px;border:1px solid #000;background:#D8FFD8"></div>
<div class="abs" style="left:1110px;top:169px;width:92px;height:10px;border:1px solid #000;background:#FFF8C0"></div>
<div class="abs" style="left:1205px;top:169px;width:92px;height:10px;border:1px solid #000;background:#FFFF70"></div>
<div class="abs" style="left:1300px;top:169px;width:92px;height:10px;border:1px solid #000;background:#FFD830"></div>
<div class="abs" style="left:1395px;top:169px;width:92px;height:10px;border:1px solid #000;background:#FFA41C"></div>
<div class="abs" style="left:1490px;top:169px;width:92px;height:10px;border:1px solid #000;background:#FF6600"></div>
<div class="abs" style="left:1585px;top:169px;width:92px;height:10px;border:1px solid #000;background:#FF5050"></div>
<div class="abs" style="left:1680px;top:169px;width:92px;height:10px;border:1px solid #000;background:#C82800"></div>
<div class="abs" style="left:1775px;top:169px;width:92px;height:10px;border:1px solid #000;background:#800000"></div>
<div class="t ser" style="left:1014px;top:182px;transform:translateX(-50%);color:#000">0</div>
<div class="t ser" style="left:1109px;top:182px;transform:translateX(-50%);color:#000">0.0975</div>
<div class="t ser" style="left:1204px;top:182px;transform:translateX(-50%);color:#000">1.22</div>
<div class="t ser" style="left:1299px;top:182px;transform:translateX(-50%);color:#000">2.44</div>
<div class="t ser" style="left:1394px;top:182px;transform:translateX(-50%);color:#000">3.66</div>
<div class="t ser" style="left:1489px;top:182px;transform:translateX(-50%);color:#000">4.88</div>
<div class="t ser" style="left:1584px;top:182px;transform:translateX(-50%);color:#000">6.09</div>
<div class="t ser" style="left:1679px;top:182px;transform:translateX(-50%);color:#000">7.31</div>
<div class="t ser" style="left:1774px;top:182px;transform:translateX(-50%);color:#000">8.53</div>
<div class="t ser" style="left:1869px;top:182px;transform:translateX(-50%);color:#000">9.76</div>
<div class="t ser" style="left:968px;top:208px;color:#008000">Вариант конструирования:Вариант 1: СП 63.13330.2012, СП 15.13330.2012</div>
<div class="t ser" style="left:968px;top:224px;color:#000">Расчет по РСН:СП 20.13330.2016_1 (СП 63.13330.2012)</div>
<div class="t ser" style="left:968px;top:240px;color:#000">Единицы измерения - см2</div>
<div class="t ser" style="left:968px;top:256px;color:#000">Шаг, Диаметр - мм</div>
<div class="t ser" style="left:968px;top:1090px;color:#000">Площадь полной арматуры AU1 AU2 AU3 AU4 AS1 AS2 AS3 AS4 . Несимметричное армирование . Максимум 9.75 в элементе 8.</div>
<svg class="abs" style="left:524px;top:216px" width="354" height="882" viewBox="524 216 354 882" shape-rendering="crispEdges">
<rect x="524" y="216" width="354" height="882" fill="#FFF8C0"/>
<rect x="665" y="263" width="12" height="11" fill="#FFFF70"/>
<rect x="759" y="379" width="12" height="12" fill="#FFFF70"/>
<rect x="736" y="394" width="35" height="12" fill="#FFFF70"/>
<rect x="700" y="486" width="47" height="12" fill="#FFFF70"/>
<rect x="689" y="498" width="58" height="11" fill="#FFFF70"/>
<rect x="689" y="509" width="58" height="12" fill="#FFFF70"/>
<rect x="689" y="521" width="58" height="11" fill="#FFFF70"/>
<rect x="677" y="532" width="70" height="12" fill="#FFFF70"/>
<rect x="677" y="544" width="70" height="11" fill="#FFFF70"/>
<rect x="665" y="555" width="71" height="12" fill="#FFFF70"/>
<rect x="700" y="570" width="24" height="12" fill="#FFFF70"/>
<rect x="724" y="570" width="12" height="12" fill="#FFA41C"/>
<rect x="736" y="570" width="35" height="12" fill="#FFFF70"/>
<rect x="677" y="582" width="35" height="11" fill="#FFFF70"/>
<rect x="712" y="582" width="24" height="11" fill="#FFA41C"/>
<rect x="736" y="582" width="11" height="11" fill="#FFFF70"/>
<rect x="653" y="593" width="71" height="12" fill="#FFFF70"/>
<rect x="724" y="593" width="12" height="12" fill="#FFA41C"/>
<rect x="736" y="593" width="11" height="12" fill="#FFFF70"/>
<rect x="595" y="605" width="58" height="11" fill="#FFFF70"/>
<rect x="653" y="605" width="24" height="11" fill="#FFA41C"/>
<rect x="677" y="605" width="12" height="11" fill="#FF6600"/>
<rect x="689" y="605" width="11" height="11" fill="#FFA41C"/>
<rect x="700" y="605" width="12" height="11" fill="#FFFF70"/>
<rect x="583" y="616" width="35" height="12" fill="#FFFF70"/>
<rect x="618" y="616" width="24" height="12" fill="#FFA41C"/>
<rect x="642" y="616" width="23" height="12" fill="#FF6600"/>
<rect x="665" y="616" width="12" height="12" fill="#800000"/>
<rect x="677" y="616" width="12" height="12" fill="#FF6600"/>
<rect x="689" y="616" width="11" height="12" fill="#FFA41C"/>
<rect x="700" y="616" width="12" height="12" fill="#FFFF70"/>
<rect x="571" y="628" width="35" height="11" fill="#FFFF70"/>
<rect x="606" y="628" width="36" height="11" fill="#FFA41C"/>
<rect x="642" y="628" width="23" height="11" fill="#FF6600"/>
<rect x="571" y="639" width="35" height="12" fill="#FFFF70"/>
<rect x="606" y="639" width="47" height="12" fill="#FFA41C"/>
<rect x="571" y="651" width="24" height="11" fill="#FFFF70"/>
<rect x="595" y="651" width="47" height="11" fill="#FFA41C"/>
<rect x="642" y="651" width="11" height="11" fill="#FFFF70"/>
<rect x="559" y="662" width="47" height="12" fill="#FFFF70"/>
<rect x="606" y="662" width="24" height="12" fill="#FFA41C"/>
<rect x="630" y="662" width="23" height="12" fill="#FFFF70"/>
<rect x="559" y="674" width="83" height="11" fill="#FFFF70"/>
<rect x="571" y="685" width="71" height="12" fill="#FFFF70"/>
<rect x="571" y="697" width="71" height="11" fill="#FFFF70"/>
<rect x="583" y="708" width="47" height="12" fill="#FFFF70"/>
<rect x="783" y="708" width="23" height="12" fill="#FFFF70"/>
<rect x="759" y="720" width="59" height="11" fill="#FFFF70"/>
<rect x="747" y="731" width="36" height="12" fill="#FFA41C"/>
<rect x="783" y="731" width="35" height="12" fill="#FFFF70"/>
<rect x="700" y="746" width="12" height="12" fill="#FFFF70"/>
<rect x="712" y="746" width="12" height="12" fill="#FF6600"/>
<rect x="724" y="746" width="35" height="12" fill="#C82800"/>
<rect x="759" y="746" width="12" height="12" fill="#FF6600"/>
<rect x="771" y="746" width="23" height="12" fill="#FFA41C"/>
<rect x="794" y="746" width="36" height="12" fill="#FFFF70"/>
<rect x="665" y="758" width="12" height="11" fill="#FFFF70"/>
<rect x="689" y="758" width="11" height="11" fill="#FFFF70"/>
<rect x="700" y="758" width="24" height="11" fill="#FFA41C"/>
<rect x="724" y="758" width="23" height="11" fill="#FF6600"/>
<rect x="747" y="758" width="36" height="11" fill="#FFA41C"/>
<rect x="783" y="758" width="35" height="11" fill="#FFFF70"/>
<rect x="665" y="769" width="82" height="12" fill="#FFA41C"/>
<rect x="747" y="769" width="59" height="12" fill="#FFFF70"/>
<rect x="653" y="781" width="12" height="11" fill="#FFFF70"/>
<rect x="665" y="781" width="59" height="11" fill="#FFA41C"/>
<rect x="724" y="781" width="23" height="11" fill="#FFFF70"/>
<rect x="642" y="792" width="11" height="12" fill="#FFFF70"/>
<rect x="653" y="792" width="71" height="12" fill="#FFA41C"/>
<rect x="724" y="792" width="23" height="12" fill="#FFFF70"/>
<rect x="630" y="804" width="23" height="11" fill="#FFFF70"/>
<rect x="653" y="804" width="71" height="11" fill="#FFA41C"/>
<rect x="724" y="804" width="23" height="11" fill="#FFFF70"/>
<rect x="630" y="815" width="23" height="12" fill="#FFFF70"/>
<rect x="653" y="815" width="71" height="12" fill="#FFA41C"/>
<rect x="724" y="815" width="12" height="12" fill="#FFFF70"/>
<rect x="618" y="827" width="35" height="11" fill="#FFFF70"/>
<rect x="653" y="827" width="71" height="11" fill="#FFA41C"/>
<rect x="724" y="827" width="12" height="11" fill="#FFFF70"/>
<rect x="618" y="838" width="47" height="12" fill="#FFFF70"/>
<rect x="665" y="838" width="59" height="12" fill="#FFA41C"/>
<rect x="724" y="838" width="12" height="12" fill="#FFFF70"/>
<rect x="618" y="850" width="47" height="11" fill="#FFFF70"/>
<rect x="665" y="850" width="59" height="11" fill="#FFA41C"/>
<rect x="724" y="850" width="12" height="11" fill="#FFFF70"/>
<rect x="618" y="861" width="71" height="12" fill="#FFFF70"/>
<rect x="689" y="861" width="23" height="12" fill="#FFA41C"/>
<rect x="712" y="861" width="24" height="12" fill="#FFFF70"/>
<rect x="618" y="873" width="82" height="11" fill="#FFFF70"/>
<rect x="700" y="873" width="12" height="11" fill="#FFA41C"/>
<rect x="712" y="873" width="24" height="11" fill="#FFFF70"/>
<rect x="606" y="884" width="94" height="12" fill="#FFFF70"/>
<rect x="700" y="884" width="12" height="12" fill="#FFA41C"/>
<rect x="712" y="884" width="24" height="12" fill="#FFFF70"/>
<rect x="595" y="896" width="141" height="11" fill="#FFFF70"/>
<rect x="583" y="907" width="153" height="12" fill="#FFFF70"/>
<rect x="583" y="922" width="70" height="12" fill="#FFFF70"/>
<rect x="700" y="922" width="59" height="12" fill="#FFFF70"/>
<rect x="571" y="934" width="94" height="11" fill="#FFFF70"/>
<rect x="689" y="934" width="35" height="11" fill="#FFFF70"/>
<rect x="724" y="934" width="12" height="11" fill="#FFA41C"/>
<rect x="736" y="934" width="11" height="11" fill="#FFFF70"/>
<rect x="571" y="945" width="47" height="12" fill="#FFFF70"/>
<rect x="618" y="945" width="12" height="12" fill="#FFA41C"/>
<rect x="630" y="945" width="94" height="12" fill="#FFFF70"/>
<rect x="724" y="945" width="12" height="12" fill="#FFA41C"/>
<rect x="736" y="945" width="11" height="12" fill="#FFFF70"/>
<rect x="559" y="957" width="36" height="12" fill="#FFFF70"/>
<rect x="595" y="957" width="105" height="12" fill="#FFA41C"/>
<rect x="700" y="957" width="47" height="12" fill="#FFFF70"/>
<rect x="559" y="969" width="24" height="11" fill="#FFFF70"/>
<rect x="583" y="969" width="47" height="11" fill="#FFA41C"/>
<rect x="630" y="969" width="35" height="11" fill="#FF6600"/>
<rect x="665" y="969" width="12" height="11" fill="#C82800"/>
<rect x="677" y="969" width="12" height="11" fill="#FF6600"/>
<rect x="689" y="969" width="23" height="11" fill="#FFA41C"/>
<rect x="712" y="969" width="12" height="11" fill="#FFFF70"/>
<rect x="548" y="980" width="35" height="12" fill="#FFFF70"/>
<rect x="583" y="980" width="47" height="12" fill="#FFA41C"/>
<rect x="630" y="980" width="23" height="12" fill="#FF6600"/>
<rect x="653" y="980" width="12" height="12" fill="#FFA41C"/>
<rect x="548" y="992" width="23" height="12" fill="#FFFF70"/>
<rect x="571" y="992" width="82" height="12" fill="#FFA41C"/>
<rect x="548" y="1004" width="23" height="11" fill="#FFFF70"/>
<rect x="571" y="1004" width="71" height="11" fill="#FFA41C"/>
<rect x="548" y="1015" width="23" height="12" fill="#FFFF70"/>
<rect x="571" y="1015" width="59" height="12" fill="#FFA41C"/>
<rect x="630" y="1015" width="12" height="12" fill="#FFFF70"/>
<rect x="548" y="1027" width="23" height="12" fill="#FFFF70"/>
<rect x="571" y="1027" width="47" height="12" fill="#FFA41C"/>
<rect x="618" y="1027" width="24" height="12" fill="#FFFF70"/>
<rect x="548" y="1039" width="23" height="11" fill="#FFFF70"/>
<rect x="571" y="1039" width="47" height="11" fill="#FFA41C"/>
<rect x="618" y="1039" width="12" height="11" fill="#FFFF70"/>
<rect x="536" y="1050" width="23" height="12" fill="#FFFF70"/>
<rect x="559" y="1050" width="47" height="12" fill="#FFA41C"/>
<rect x="606" y="1050" width="24" height="12" fill="#FFFF70"/>
<rect x="536" y="1062" width="12" height="12" fill="#FFFF70"/>
<rect x="548" y="1062" width="47" height="12" fill="#FFA41C"/>
<rect x="595" y="1062" width="35" height="12" fill="#FFFF70"/>
<rect x="536" y="1074" width="59" height="11" fill="#FFA41C"/>
<rect x="595" y="1074" width="23" height="11" fill="#FFFF70"/>
<rect x="524" y="1085" width="24" height="12" fill="#FF6600"/>
<rect x="548" y="1085" width="35" height="12" fill="#FFA41C"/>
<rect x="583" y="1085" width="35" height="12" fill="#FFFF70"/>
<path fill="#0a820a" d="M524 216h1v882h-1zM536 216h1v882h-1zM548 216h1v882h-1zM559 216h1v882h-1zM571 216h1v882h-1zM583 216h1v882h-1zM595 216h1v882h-1zM606 216h1v882h-1zM618 216h1v882h-1zM630 216h1v882h-1zM642 216h1v882h-1zM653 216h1v882h-1zM665 216h1v882h-1zM677 216h1v882h-1zM689 216h1v882h-1zM700 216h1v882h-1zM712 216h1v882h-1zM724 216h1v882h-1zM736 216h1v882h-1zM747 216h1v882h-1zM759 216h1v882h-1zM771 216h1v882h-1zM783 216h1v882h-1zM794 216h1v882h-1zM806 216h1v882h-1zM818 216h1v882h-1zM830 216h1v882h-1zM841 216h1v882h-1zM853 216h1v882h-1zM865 216h1v882h-1zM877 216h1v882h-1zM524 216h354v1h-354zM524 228h354v1h-354zM524 239h354v1h-354zM524 251h354v1h-354zM524 263h354v1h-354zM524 274h354v1h-354zM524 286h354v1h-354zM524 298h354v1h-354zM524 309h354v1h-354zM524 321h354v1h-354zM524 333h354v1h-354zM524 344h354v1h-354zM524 356h354v1h-354zM524 368h354v1h-354zM524 379h354v1h-354zM524 394h354v1h-354zM524 406h354v1h-354zM524 417h354v1h-354zM524 429h354v1h-354zM524 440h354v1h-354zM524 452h354v1h-354zM524 463h354v1h-354zM524 475h354v1h-354zM524 486h354v1h-354zM524 498h354v1h-354zM524 509h354v1h-354zM524 521h354v1h-354zM524 532h354v1h-354zM524 544h354v1h-354zM524 555h354v1h-354zM524 570h354v1h-354zM524 582h354v1h-354zM524 593h354v1h-354zM524 605h354v1h-354zM524 616h354v1h-354zM524 628h354v1h-354zM524 639h354v1h-354zM524 651h354v1h-354zM524 662h354v1h-354zM524 674h354v1h-354zM524 685h354v1h-354zM524 697h354v1h-354zM524 708h354v1h-354zM524 720h354v1h-354zM524 731h354v1h-354zM524 746h354v1h-354zM524 758h354v1h-354zM524 769h354v1h-354zM524 781h354v1h-354zM524 792h354v1h-354zM524 804h354v1h-354zM524 815h354v1h-354zM524 827h354v1h-354zM524 838h354v1h-354zM524 850h354v1h-354zM524 861h354v1h-354zM524 873h354v1h-354zM524 884h354v1h-354zM524 896h354v1h-354zM524 907h354v1h-354zM524 922h354v1h-354zM524 934h354v1h-354zM524 945h354v1h-354zM524 957h354v1h-354zM524 969h354v1h-354zM524 980h354v1h-354zM524 992h354v1h-354zM524 1004h354v1h-354zM524 1015h354v1h-354zM524 1027h354v1h-354zM524 1039h354v1h-354zM524 1050h354v1h-354zM524 1062h354v1h-354zM524 1074h354v1h-354zM524 1085h354v1h-354zM524 391h354v1h-354zM524 567h354v1h-354zM524 743h354v1h-354zM524 919h354v1h-354zM524 1097h354v1h-354z"/>
<rect x="524" y="392" width="354" height="2" fill="#00007f"/>
<path fill="#fff" d="M524 392h1v2h-1zM536 392h1v2h-1zM548 392h1v2h-1zM559 392h1v2h-1zM571 392h1v2h-1zM583 392h1v2h-1zM595 392h1v2h-1zM606 392h1v2h-1zM618 392h1v2h-1zM630 392h1v2h-1zM642 392h1v2h-1zM653 392h1v2h-1zM665 392h1v2h-1zM677 392h1v2h-1zM689 392h1v2h-1zM700 392h1v2h-1zM712 392h1v2h-1zM724 392h1v2h-1zM736 392h1v2h-1zM747 392h1v2h-1zM759 392h1v2h-1zM771 392h1v2h-1zM783 392h1v2h-1zM794 392h1v2h-1zM806 392h1v2h-1zM818 392h1v2h-1zM830 392h1v2h-1zM841 392h1v2h-1zM853 392h1v2h-1zM865 392h1v2h-1zM877 392h1v2h-1z"/>
<rect x="524" y="568" width="354" height="2" fill="#00007f"/>
<path fill="#fff" d="M524 568h1v2h-1zM536 568h1v2h-1zM548 568h1v2h-1zM559 568h1v2h-1zM571 568h1v2h-1zM583 568h1v2h-1zM595 568h1v2h-1zM606 568h1v2h-1zM618 568h1v2h-1zM630 568h1v2h-1zM642 568h1v2h-1zM653 568h1v2h-1zM665 568h1v2h-1zM677 568h1v2h-1zM689 568h1v2h-1zM700 568h1v2h-1zM712 568h1v2h-1zM724 568h1v2h-1zM736 568h1v2h-1zM747 568h1v2h-1zM759 568h1v2h-1zM771 568h1v2h-1zM783 568h1v2h-1zM794 568h1v2h-1zM806 568h1v2h-1zM818 568h1v2h-1zM830 568h1v2h-1zM841 568h1v2h-1zM853 568h1v2h-1zM865 568h1v2h-1zM877 568h1v2h-1z"/>
<rect x="524" y="744" width="354" height="2" fill="#00007f"/>
<path fill="#fff" d="M524 744h1v2h-1zM536 744h1v2h-1zM548 744h1v2h-1zM559 744h1v2h-1zM571 744h1v2h-1zM583 744h1v2h-1zM595 744h1v2h-1zM606 744h1v2h-1zM618 744h1v2h-1zM630 744h1v2h-1zM642 744h1v2h-1zM653 744h1v2h-1zM665 744h1v2h-1zM677 744h1v2h-1zM689 744h1v2h-1zM700 744h1v2h-1zM712 744h1v2h-1zM724 744h1v2h-1zM736 744h1v2h-1zM747 744h1v2h-1zM759 744h1v2h-1zM771 744h1v2h-1zM783 744h1v2h-1zM794 744h1v2h-1zM806 744h1v2h-1zM818 744h1v2h-1zM830 744h1v2h-1zM841 744h1v2h-1zM853 744h1v2h-1zM865 744h1v2h-1zM877 744h1v2h-1z"/>
<rect x="524" y="920" width="354" height="2" fill="#00007f"/>
<path fill="#fff" d="M524 920h1v2h-1zM536 920h1v2h-1zM548 920h1v2h-1zM559 920h1v2h-1zM571 920h1v2h-1zM583 920h1v2h-1zM595 920h1v2h-1zM606 920h1v2h-1zM618 920h1v2h-1zM630 920h1v2h-1zM642 920h1v2h-1zM653 920h1v2h-1zM665 920h1v2h-1zM677 920h1v2h-1zM689 920h1v2h-1zM700 920h1v2h-1zM712 920h1v2h-1zM724 920h1v2h-1zM736 920h1v2h-1zM747 920h1v2h-1zM759 920h1v2h-1zM771 920h1v2h-1zM783 920h1v2h-1zM794 920h1v2h-1zM806 920h1v2h-1zM818 920h1v2h-1zM830 920h1v2h-1zM841 920h1v2h-1zM853 920h1v2h-1zM865 920h1v2h-1zM877 920h1v2h-1z"/>
<rect x="666" y="275" width="81" height="119" fill="#fff"/>
<rect x="666" y="629" width="81" height="117" fill="#fff"/>
<rect x="666" y="981" width="81" height="117" fill="#fff"/>
<rect x="666.5" y="617.5" width="10" height="10" fill="none" stroke="#ffff00" stroke-width="1"/>
</svg>
<svg class="abs" style="left:1419px;top:200px" width="355" height="885" viewBox="1419 200 355 885" shape-rendering="crispEdges">
<rect x="1419" y="201" width="355" height="884" fill="#808080"/>
<path fill="#000" d="M1419 201h1v884h-1zM1431 201h1v884h-1zM1443 201h1v884h-1zM1455 201h1v884h-1zM1467 201h1v884h-1zM1478 201h1v884h-1zM1490 201h1v884h-1zM1502 201h1v884h-1zM1514 201h1v884h-1zM1526 201h1v884h-1zM1537 201h1v884h-1zM1549 201h1v884h-1zM1561 201h1v884h-1zM1573 201h1v884h-1zM1585 201h1v884h-1zM1596 201h1v884h-1zM1608 201h1v884h-1zM1620 201h1v884h-1zM1632 201h1v884h-1zM1644 201h1v884h-1zM1655 201h1v884h-1zM1667 201h1v884h-1zM1679 201h1v884h-1zM1691 201h1v884h-1zM1703 201h1v884h-1zM1714 201h1v884h-1zM1726 201h1v884h-1zM1738 201h1v884h-1zM1750 201h1v884h-1zM1762 201h1v884h-1zM1773 201h1v884h-1zM1419 201h355v1h-355zM1419 213h355v1h-355zM1419 224h355v1h-355zM1419 236h355v1h-355zM1419 248h355v1h-355zM1419 259h355v1h-355zM1419 271h355v1h-355zM1419 283h355v1h-355zM1419 294h355v1h-355zM1419 306h355v1h-355zM1419 318h355v1h-355zM1419 329h355v1h-355zM1419 341h355v1h-355zM1419 353h355v1h-355zM1419 364h355v1h-355zM1419 376h355v1h-355zM1419 379h355v1h-355zM1419 391h355v1h-355zM1419 402h355v1h-355zM1419 414h355v1h-355zM1419 425h355v1h-355zM1419 437h355v1h-355zM1419 449h355v1h-355zM1419 460h355v1h-355zM1419 472h355v1h-355zM1419 483h355v1h-355zM1419 495h355v1h-355zM1419 507h355v1h-355zM1419 518h355v1h-355zM1419 530h355v1h-355zM1419 541h355v1h-355zM1419 553h355v1h-355zM1419 556h355v1h-355zM1419 568h355v1h-355zM1419 579h355v1h-355zM1419 591h355v1h-355zM1419 602h355v1h-355zM1419 614h355v1h-355zM1419 626h355v1h-355zM1419 637h355v1h-355zM1419 649h355v1h-355zM1419 660h355v1h-355zM1419 672h355v1h-355zM1419 684h355v1h-355zM1419 695h355v1h-355zM1419 707h355v1h-355zM1419 718h355v1h-355zM1419 730h355v1h-355zM1419 733h355v1h-355zM1419 745h355v1h-355zM1419 756h355v1h-355zM1419 768h355v1h-355zM1419 779h355v1h-355zM1419 791h355v1h-355zM1419 803h355v1h-355zM1419 814h355v1h-355zM1419 826h355v1h-355zM1419 837h355v1h-355zM1419 849h355v1h-355zM1419 861h355v1h-355zM1419 872h355v1h-355zM1419 884h355v1h-355zM1419 895h355v1h-355zM1419 907h355v1h-355zM1419 910h355v1h-355zM1419 922h355v1h-355zM1419 933h355v1h-355zM1419 945h355v1h-355zM1419 956h355v1h-355zM1419 968h355v1h-355zM1419 980h355v1h-355zM1419 991h355v1h-355zM1419 1003h355v1h-355zM1419 1014h355v1h-355zM1419 1026h355v1h-355zM1419 1038h355v1h-355zM1419 1049h355v1h-355zM1419 1061h355v1h-355zM1419 1072h355v1h-355zM1419 1084h355v1h-355z"/>
<rect x="1562" y="200" width="82" height="179" fill="#fff"/>
<rect x="1562" y="557" width="82" height="176" fill="#fff"/>
<rect x="1562" y="911" width="82" height="174" fill="#fff"/>
<rect x="1561" y="200" width="63" height="2" fill="#d8ffd8"/>
<rect x="1624" y="200" width="21" height="2" fill="#fff3b0"/>
<defs><linearGradient id="bg2"><stop offset="0" stop-color="#800000"/><stop offset="0.11" stop-color="#800000"/><stop offset="0.11" stop-color="#c82800"/><stop offset="0.15" stop-color="#c82800"/><stop offset="0.15" stop-color="#ff5050"/><stop offset="0.18" stop-color="#ff5050"/><stop offset="0.18" stop-color="#ff6600"/><stop offset="0.29" stop-color="#ff6600"/><stop offset="0.29" stop-color="#ffa020"/><stop offset="0.33" stop-color="#ffa020"/><stop offset="0.33" stop-color="#ffd830"/><stop offset="0.4" stop-color="#ffd830"/><stop offset="0.4" stop-color="#ffff70"/><stop offset="0.44" stop-color="#ffff70"/><stop offset="0.44" stop-color="#fff3b0"/><stop offset="0.55" stop-color="#fff3b0"/><stop offset="0.55" stop-color="#d8ffd8"/><stop offset="0.73" stop-color="#d8ffd8"/><stop offset="0.73" stop-color="#fff3b0"/><stop offset="0.78" stop-color="#fff3b0"/><stop offset="0.78" stop-color="#ffff70"/><stop offset="0.85" stop-color="#ffff70"/><stop offset="0.85" stop-color="#ffd830"/><stop offset="0.96" stop-color="#ffd830"/><stop offset="0.96" stop-color="#ff8000"/><stop offset="1" stop-color="#ff8000"/></linearGradient></defs>
<rect x="1561" y="555" width="84" height="3" fill="url(#bg2)"/>
<defs><linearGradient id="bg4"><stop offset="0" stop-color="#800000"/><stop offset="0.11" stop-color="#800000"/><stop offset="0.11" stop-color="#c82800"/><stop offset="0.15" stop-color="#c82800"/><stop offset="0.15" stop-color="#ff5050"/><stop offset="0.18" stop-color="#ff5050"/><stop offset="0.18" stop-color="#ff6600"/><stop offset="0.29" stop-color="#ff6600"/><stop offset="0.29" stop-color="#ffa020"/><stop offset="0.33" stop-color="#ffa020"/><stop offset="0.33" stop-color="#ffd830"/><stop offset="0.4" stop-color="#ffd830"/><stop offset="0.4" stop-color="#ffff70"/><stop offset="0.44" stop-color="#ffff70"/><stop offset="0.44" stop-color="#fff3b0"/><stop offset="0.55" stop-color="#fff3b0"/><stop offset="0.55" stop-color="#d8ffd8"/><stop offset="0.73" stop-color="#d8ffd8"/><stop offset="0.73" stop-color="#fff3b0"/><stop offset="0.78" stop-color="#fff3b0"/><stop offset="0.78" stop-color="#ffff70"/><stop offset="0.85" stop-color="#ffff70"/><stop offset="0.85" stop-color="#ffd830"/><stop offset="0.96" stop-color="#ffd830"/><stop offset="0.96" stop-color="#ff8000"/><stop offset="1" stop-color="#ff8000"/></linearGradient></defs>
<rect x="1561" y="909" width="84" height="3" fill="url(#bg4)"/>
</svg>
<svg class="abs" style="left:33px;top:1030px" width="50" height="56"><path d="M12.500 45.500V26M9.500 31l3-5 3 5" fill="none" stroke="#f00" stroke-width="1"/><path d="M12.500 45.500H31M26 42.500l5 3-5 3" fill="none" stroke="#008000" stroke-width="1"/><text x="6" y="18" font-family="Liberation Sans,sans-serif" font-weight="bold" font-size="15" fill="#f00">Z</text><text x="31" y="44" font-family="Liberation Sans,sans-serif" font-weight="bold" font-size="15" fill="#008000">X</text></svg>
<svg class="abs" style="left:993px;top:1030px" width="50" height="56"><path d="M12.500 45.500V26M9.500 31l3-5 3 5" fill="none" stroke="#f00" stroke-width="1"/><path d="M12.500 45.500H31M26 42.500l5 3-5 3" fill="none" stroke="#008000" stroke-width="1"/><text x="6" y="18" font-family="Liberation Sans,sans-serif" font-weight="bold" font-size="15" fill="#f00">Z</text><text x="31" y="44" font-family="Liberation Sans,sans-serif" font-weight="bold" font-size="15" fill="#008000">X</text></svg>
<div class="abs" style="left:1816px;top:212px;width:75px;height:107px;box-sizing:border-box;border:2px solid #8a8a8a;background:linear-gradient(#cdd0d5 24%,#a5a9b3)"><div style="position:absolute;inset:0;border:1px solid #e4e4e4"></div><div style="position:absolute;left:1px;top:1px;right:1px;height:22px;background:#a4a6a6"></div><div style="position:absolute;left:4px;top:5px;font-size:11.500px;line-height:14px;font-weight:bold;color:#5b5b66">Про...</div></div><svg class="abs" style="left:1816px;top:212px" width="75" height="107" viewBox="1816 212 75 107"><path d="M1857 225h8l-4 4.500z" fill="#555"/><path d="M1876.500 223l7 7M1883.500 223l-7 7" stroke="#444" stroke-width="1.200"/><rect x="1822" y="293" width="20" height="20" fill="#fbc860"/><g transform="translate(1832,250.500)"><path d="M-6 -4l6-2.500 6 2.500v8l-6 4-6-4z" fill="#3a4858" stroke="#2a3644" stroke-width=".8"/><path d="M-6 -4l5 2v9.500l-5-3.500z" fill="#dbe6f0"/><path d="M-6 -4l6-2.500 6 2.500-7 2z" fill="#9ab0bc"/></g><path d="M1849 245l2-3.500h10l-2 3.500z" fill="#fff" stroke="#e02020" stroke-width="1"/><g transform="translate(1854,253)"><path d="M-6 -2.500l3.500-3.500h9l-3.500 3.500z" fill="#7d8c98" stroke="#2a3644" stroke-width=".8"/><path d="M3 -2.500l3.500-3.500v8.500l-3.500 3.500z" fill="#3a4858" stroke="#2a3644" stroke-width=".8"/><path d="M-6 -2.500h9v8.500h-9z" fill="#dbe6f0" stroke="#2a3644" stroke-width=".9"/></g><rect x="1874.500" y="242.500" width="9" height="9" fill="#fff" stroke="#2090e0" stroke-width="1.300"/><g transform="translate(1874,253)"><path d="M-6 -2.500l3.500-3.500h9l-3.500 3.500z" fill="#7d8c98" stroke="#2a3644" stroke-width=".8"/><path d="M3 -2.500l3.500-3.500v8.500l-3.500 3.500z" fill="#3a4858" stroke="#2a3644" stroke-width=".8"/><path d="M-6 -2.500h9v8.500h-9z" fill="#dbe6f0" stroke="#2a3644" stroke-width=".9"/></g><path d="M1824 272l3-3v11l-3 3z" fill="#c8f0c8" stroke="#30a030" stroke-width="1"/><g transform="translate(1833,278)"><path d="M-6 -2.500l3.500-3.500h9l-3.500 3.500z" fill="#7d8c98" stroke="#2a3644" stroke-width=".8"/><path d="M3 -2.500l3.500-3.500v8.500l-3.500 3.500z" fill="#3a4858" stroke="#2a3644" stroke-width=".8"/><path d="M-6 -2.500h9v8.500h-9z" fill="#dbe6f0" stroke="#2a3644" stroke-width=".9"/></g><g transform="translate(1854,278)"><path d="M-6 -2.500l3.500-3.500h9l-3.500 3.500z" fill="#7d8c98" stroke="#2a3644" stroke-width=".8"/><path d="M3 -2.500l3.500-3.500v8.500l-3.500 3.500z" fill="#3a4858" stroke="#2a3644" stroke-width=".8"/><path d="M-6 -2.500h9v8.500h-9z" fill="#dbe6f0" stroke="#2a3644" stroke-width=".9"/></g><path d="M1846.500 273v-3.500h3.500M1858 269.500h3.500v3.500M1861.500 281v3.500h-3.500M1850 284.500h-3.500v-3.500" fill="none" stroke="#e02020" stroke-width="1.200" stroke-dasharray="2.500 1"/><g transform="translate(1874,278)"><path d="M-6 -2.500l3.500-3.500h9l-3.500 3.500z" fill="#7d8c98" stroke="#2a3644" stroke-width=".8"/><path d="M3 -2.500l3.500-3.500v8.500l-3.500 3.500z" fill="#3a4858" stroke="#2a3644" stroke-width=".8"/><path d="M-6 -2.500h9v8.500h-9z" fill="#dbe6f0" stroke="#2a3644" stroke-width=".9"/></g><path d="M1880.500 273l3-3v11l-3 3z" fill="#c8f0c8" stroke="#30a030" stroke-width="1"/><g transform="translate(1836,301)"><path d="M-6 -2.500l3.500-3.500h9l-3.500 3.500z" fill="#7d8c98" stroke="#2a3644" stroke-width=".8"/><path d="M3 -2.500l3.500-3.500v8.500l-3.500 3.500z" fill="#3a4858" stroke="#2a3644" stroke-width=".8"/><path d="M-6 -2.500h9v8.500h-9z" fill="#dbe6f0" stroke="#2a3644" stroke-width=".9"/></g><rect x="1824.500" y="302.500" width="9" height="9" fill="#e8f4fc" stroke="#2090e0" stroke-width="1.300"/><g transform="translate(1854,301)"><path d="M-6 -2.500l3.500-3.500h9l-3.500 3.500z" fill="#7d8c98" stroke="#2a3644" stroke-width=".8"/><path d="M3 -2.500l3.500-3.500v8.500l-3.500 3.500z" fill="#3a4858" stroke="#2a3644" stroke-width=".8"/><path d="M-6 -2.500h9v8.500h-9z" fill="#dbe6f0" stroke="#2a3644" stroke-width=".9"/></g><path d="M1849 311l2-3.500h10l-2 3.500z" fill="#fff" stroke="#e02020" stroke-width="1"/><g transform="translate(1876,304)"><path d="M-6 -3.500l6-3 6 3v7.500l-6 3.500-6-3.500z" fill="#3a4858" stroke="#2a3644" stroke-width=".8"/><path d="M-6 -3.500l6 2.500v9l-6-3.500z" fill="#dbe6f0"/><path d="M-6 -3.500l6-3 6 3-6 2.500z" fill="#9ab0bc"/><path d="M-7 -4.500v8" stroke="#30a030"/><path d="M7 -4.500v8" stroke="#3080d0"/><path d="M-6 5.500l6 3.500 6-3.500" fill="none" stroke="#e05050"/></g></svg>
<div class="dlg" style="left:109px;top:376px;background:#a6aab5;border:1px solid #7e828c"><div style="position:absolute;left:7px;top:0;width:253px;height:30px;background:#758398"></div><svg style="position:absolute;left:17px;top:9px" width="15" height="12"><rect x=".5" y=".5" width="14" height="11" fill="#e8eef2" stroke="#667"/><rect x="2" y="2" width="6" height="8" fill="#2f7d6e"/><rect x="9" y="2" width="4" height="5" fill="#9ab"/></svg><div class="d" style="left:37px;top:8px;font-size:12px;line-height:14px;color:#b4bcc8">Элемент 1872</div><div style="position:absolute;left:227px;top:0;width:1px;height:30px;background:#6b798e"></div><svg style="position:absolute;left:238px;top:10px" width="10" height="9"><path d="M1 1l8 7M9 1l-8 7" stroke="#3a3f48" stroke-width="2.2"/></svg><div style="position:absolute;left:7px;top:30px;width:253px;height:571px;background:#f0f0f0"><div class="gb" style="left:5px;top:7px;width:243px;height:32px"></div><div class="gl" style="left:12px;top:1px">Номера узлов</div><div class="fd" style="left:8px;top:16px;width:230px;height:19px">2024, 2030, 2025, 2031</div><div class="gb" style="left:5px;top:43px;width:243px;height:32px"></div><div class="d" style="left:11px;top:52px;color:#000">№</div><div class="fw" style="left:33px;top:49px;width:50px;height:20px;padding-top:3px">1872</div><div class="d" style="left:87px;top:52px;color:#000">Блок N</div><div class="fd" style="left:129px;top:50px;width:32px;height:20px;color:#000;border-color:#7a7a7a;padding-top:3px">4</div><div class="cb" style="left:164px;top:53px"></div><div class="d" style="left:180px;top:53px;color:#000">Отмеченный</div><div class="gb" style="left:4px;top:83px;width:244px;height:33px"></div><div class="gl" style="left:9px;top:77px">Тип жесткости</div><div class="fw" style="left:8px;top:93px;width:236px;height:22px;border-color:#adadad;padding-top:5px">1. Пластина  Н 20</div><svg style="position:absolute;left:231px;top:102px" width="8" height="5"><path d="M1 1l3 3 3-3" fill="none" stroke="#888" stroke-width="1.1"/></svg><div class="gb" style="left:7px;top:123px;width:66px;height:31px"></div><div class="gl" style="left:14px;top:117px">Тип КЭ</div><div class="gb" style="left:81px;top:123px;width:76px;height:31px"></div><div class="gl" style="left:87px;top:117px">Угол соглас.</div><div class="gb" style="left:165px;top:123px;width:77px;height:31px"></div><div class="gl" style="left:171px;top:117px">Ортотропия</div><div class="fd" style="left:18px;top:133px;width:45px;height:19px">44</div><div class="fd" style="left:93px;top:133px;width:53px;height:19px">-0</div><div class="fd" style="left:176px;top:133px;width:53px;height:19px">0</div><div class="gb" style="left:4px;top:163px;width:244px;height:30px"></div><div class="gl" style="left:9px;top:157px">Площадь, координаты центра тяжести</div><div class="fd" style="left:6px;top:169px;width:236px;height:23px;border-color:#696969 #a0a0a0 #a0a0a0 #696969;color:#000;padding-top:2px">S=0.0376677м2, Xc=2.5м, Yc=0м, Zc=8.09416</div><div style="position:absolute;left:1px;top:217px;width:252px;height:351px;border:1px solid;border-color:#fff #696969 #696969 #fff;box-shadow:1px 1px 0 #a0a0a0"></div><div style="position:absolute;left:4px;top:197px;width:21px;height:20px;background:#f0f0f0;border:1px solid;border-color:#fff #696969 transparent #fff"></div><div style="position:absolute;left:25px;top:197px;width:21px;height:20px;background:#f0f0f0;border:1px solid;border-color:#fff #696969 transparent #fff"></div><div style="position:absolute;left:45px;top:194px;width:26px;height:24px;background:#f0f0f0;border:1px solid;border-color:#fff #696969 #f0f0f0 #fff;box-shadow:1px 0 0 #a0a0a0"></div><div style="position:absolute;left:7px;top:200px;font:bold 13px 'Liberation Serif',serif;color:#1a1a8a;line-height:14px">C1</div><svg style="position:absolute;left:27px;top:199px" width="18" height="17"><path d="M3 15L11 5" stroke="#e0a000" stroke-width="3" stroke-linecap="round"/><path d="M8 3q5-3 9 1l-1 1q-3-2-6 0z" fill="#999" stroke="#666" stroke-width=".6"/></svg><svg style="position:absolute;left:49px;top:196px" width="18" height="17"><path d="M1 6l4-4h11l-4 4z" fill="#b8c4bc" stroke="#555" stroke-width=".7"/><path d="M1 6h11v9H1z" fill="#7d9488" stroke="#555" stroke-width=".7"/><path d="M12 6l4-4v9l-4 4z" fill="#e8d820" stroke="#555" stroke-width=".7"/></svg><div style="position:absolute;left:165px;top:196px;width:79px;height:16px;background:#e1e1e1;border:1px solid #adadad;font-size:11px;line-height:14px;text-align:center">Сочетания...</div><div class="gb" style="left:4px;top:228px;width:76px;height:30px"></div><div class="gl" style="left:10px;top:222px">Вариант</div><div class="gb" style="left:85px;top:228px;width:114px;height:30px"></div><div class="gl" style="left:92px;top:222px">Сечение</div><div class="fw" style="left:18px;top:237px;width:23px;height:19px">1</div><div class="sp" style="left:42px;top:237px"></div><svg style="position:absolute;left:46px;top:241px" width="8" height="5"><path d="M1 4l3-3 3 3" fill="none" stroke="#aaa" stroke-width="1.1"/></svg><svg style="position:absolute;left:46px;top:249px" width="8" height="5"><path d="M1 1l3 3 3-3" fill="none" stroke="#aaa" stroke-width="1.1"/></svg><div class="fd" style="left:90px;top:237px;width:21px;height:19px">1</div><div class="sp" style="left:112px;top:237px"></div><svg style="position:absolute;left:116px;top:241px" width="8" height="5"><path d="M1 4l3-3 3 3" fill="none" stroke="#999" stroke-width="1.1"/></svg><svg style="position:absolute;left:116px;top:249px" width="8" height="5"><path d="M1 1l3 3 3-3" fill="none" stroke="#999" stroke-width="1.1"/></svg><div class="cb" style="left:131px;top:241px;border-color:#bbb;background:#f6f6f6"></div><div class="d" style="left:148px;top:240px;color:#8a8a8a">Показать</div><div class="d" style="left:3px;top:264px;color:#000">АРМАТУРА продольная</div><div class="tb" style="left:1px;top:279px;width:244px;height:75px"><div class="th" style="left:1px;width:48px">Арма...</div><div class="th" style="left:49px;width:48px">AU1</div><div class="th" style="left:97px;width:48px">AU2</div><div class="th" style="left:145px;width:48px">AU3</div><div class="th" style="left:193px;width:48px">AU4</div></div><div class="tb" style="left:1px;top:353px;width:244px;height:75px"><div class="th" style="left:1px;width:40px">Ар...</div><div class="th" style="left:41px;width:40px">AS1</div><div class="th" style="left:81px;width:40px">AS2</div><div class="th" style="left:121px;width:40px">AS3</div><div class="th" style="left:161px;width:40px">AS4</div><div class="th" style="left:201px;width:40px">%</div><div class="d" style="left:7px;top:21px">ПЛН</div><div class="d" style="left:52px;top:21px">8.30</div><div class="d" style="left:92px;top:21px">8.30</div><div class="d" style="left:132px;top:21px">4.90</div><div class="d" style="left:172px;top:21px">4.90</div><div class="d" style="left:7px;top:38px">ПРЧН</div><div class="d" style="left:52px;top:38px">8.30</div><div class="d" style="left:92px;top:38px">8.30</div><div class="d" style="left:132px;top:38px">4.90</div><div class="d" style="left:172px;top:38px">4.90</div></div><div style="position:absolute;left:2px;top:430px;width:248px;height:32px;border:1px solid;border-color:#696969 #a0a0a0 #a0a0a0 #696969;font-size:11px;line-height:13px;padding:2px 0 0 2px;white-space:pre">Шаг арматурных стержней 200 мм</div><div class="d" style="left:5px;top:467px;color:#000">АРМАТУРА поперечная</div><div class="d" style="left:143px;top:467px;color:#000">Ширина трещин</div><div class="tb" style="left:2px;top:485px;width:137px;height:74px"><div class="th" style="left:1px;width:45px">Шаг ...</div><div class="th" style="left:46px;width:44px">ASW1</div><div class="th" style="left:90px;width:44px">ASW2</div><div class="d" style="left:7px;top:20px">ПЛН</div><div class="d" style="left:107px;top:20px">---</div></div><div class="tb" style="left:141px;top:485px;width:107px;height:74px"><div class="th" style="left:1px;width:51px">Кратк...</div><div class="th" style="left:52px;width:52px">Длит...</div><div class="d" style="left:7px;top:20px">0.07</div><div class="d" style="left:67px;top:20px">0.07</div></div></div></div><div class="dlg" style="left:1055px;top:355px;background:#758398;border:1px solid #5d6a7c"><div style="position:absolute;left:7px;top:0;width:253px;height:30px;background:#758398"></div><svg style="position:absolute;left:17px;top:9px" width="15" height="12"><rect x=".5" y=".5" width="14" height="11" fill="#e8eef2" stroke="#667"/><rect x="2" y="2" width="6" height="8" fill="#2f7d6e"/><rect x="9" y="2" width="4" height="5" fill="#9ab"/></svg><div class="d" style="left:37px;top:8px;font-size:12px;line-height:14px;color:#fff">Элемент 8</div><div style="position:absolute;left:227px;top:0;width:32px;height:30px;background:#c75050"></div><svg style="position:absolute;left:238px;top:10px" width="10" height="9"><path d="M1 1l8 7M9 1l-8 7" stroke="#000" stroke-width="2.2"/></svg><div style="position:absolute;left:7px;top:30px;width:253px;height:571px;background:#f0f0f0"><div class="gb" style="left:5px;top:7px;width:243px;height:32px"></div><div class="gl" style="left:12px;top:1px">Номера узлов</div><div class="fd" style="left:8px;top:16px;width:230px;height:19px">2281, 2282</div><div class="gb" style="left:5px;top:43px;width:243px;height:32px"></div><div class="d" style="left:11px;top:52px;color:#000">№</div><div class="fw" style="left:33px;top:49px;width:50px;height:20px;padding-top:3px">8</div><div class="d" style="left:87px;top:52px;color:#000">Блок N</div><div class="fd" style="left:129px;top:50px;width:32px;height:20px;color:#000;border-color:#7a7a7a;padding-top:3px">4</div><div class="cb" style="left:164px;top:53px"></div><div class="d" style="left:180px;top:53px;color:#000">Отмеченный</div><div class="gb" style="left:4px;top:83px;width:244px;height:33px"></div><div class="gl" style="left:9px;top:77px">Тип жесткости</div><div class="fw" style="left:8px;top:93px;width:236px;height:22px;border-color:#adadad;padding-top:5px">3. Брус 20 X 97.5</div><svg style="position:absolute;left:231px;top:102px" width="8" height="5"><path d="M1 1l3 3 3-3" fill="none" stroke="#888" stroke-width="1.1"/></svg><div class="gb" style="left:7px;top:123px;width:66px;height:31px"></div><div class="gl" style="left:14px;top:117px">Тип КЭ</div><div class="gb" style="left:81px;top:123px;width:76px;height:31px"></div><div class="gl" style="left:87px;top:117px">К-во сечений</div><div class="gb" style="left:165px;top:123px;width:77px;height:31px"></div><div class="gl" style="left:171px;top:117px">Ортотропия</div><div class="fd" style="left:18px;top:133px;width:45px;height:19px">10</div><div class="fd" style="left:93px;top:133px;width:53px;height:19px">3</div><div class="fd" style="left:176px;top:133px;width:53px;height:19px"></div><div class="gb" style="left:4px;top:163px;width:244px;height:30px"></div><div class="gl" style="left:9px;top:157px">Длина, координаты центра тяжести</div><div class="fd" style="left:6px;top:169px;width:236px;height:23px;border-color:#696969 #a0a0a0 #a0a0a0 #696969;color:#000;padding-top:2px">L=0.2м, Xc=12.5м, Yc=0м, Zc=8.975м</div><div style="position:absolute;left:1px;top:217px;width:252px;height:351px;border:1px solid;border-color:#fff #696969 #696969 #fff;box-shadow:1px 1px 0 #a0a0a0"></div><div style="position:absolute;left:4px;top:197px;width:21px;height:20px;background:#f0f0f0;border:1px solid;border-color:#fff #696969 transparent #fff"></div><div style="position:absolute;left:25px;top:197px;width:21px;height:20px;background:#f0f0f0;border:1px solid;border-color:#fff #696969 transparent #fff"></div><div style="position:absolute;left:46px;top:197px;width:21px;height:20px;background:#f0f0f0;border:1px solid;border-color:#fff #696969 transparent #fff"></div><div style="position:absolute;left:67px;top:197px;width:21px;height:20px;background:#f0f0f0;border:1px solid;border-color:#fff #696969 transparent #fff"></div><div style="position:absolute;left:88px;top:197px;width:21px;height:20px;background:#f0f0f0;border:1px solid;border-color:#fff #696969 transparent #fff"></div><div style="position:absolute;left:108px;top:194px;width:26px;height:24px;background:#f0f0f0;border:1px solid;border-color:#fff #696969 #f0f0f0 #fff;box-shadow:1px 0 0 #a0a0a0"></div><div style="position:absolute;left:7px;top:200px;font:bold 13px 'Liberation Serif',serif;color:#1a1a8a;line-height:14px">C1</div><svg style="position:absolute;left:27px;top:199px" width="18" height="17"><path d="M1 6h16M9 6v10M1 3v6M17 3v6" stroke="#223" stroke-width="1.300"/><circle cx="9" cy="6" r="3" fill="#28a070" stroke="#134"/></svg><svg style="position:absolute;left:48px;top:199px" width="18" height="17"><path d="M1 1l14 14" stroke="#246" stroke-width="3"/><path d="M15 2l-7 7M9 9h7" stroke="#c02040" stroke-width="1.400"/><path d="M9 9l-5 6" stroke="#28a040" stroke-width="1.400"/></svg><svg style="position:absolute;left:69px;top:199px" width="18" height="17"><path d="M3 15L11 5" stroke="#e0a000" stroke-width="3" stroke-linecap="round"/><path d="M8 3q5-3 9 1l-1 1q-3-2-6 0z" fill="#999" stroke="#666" stroke-width=".6"/></svg><svg style="position:absolute;left:91px;top:199px" width="18" height="17"><path d="M1 1h15v5h-4v5h4v5H1v-5h4V6H1z" fill="#7d8a80" stroke="#444" stroke-width=".7"/><path d="M3 3h2M8 3h2M12 3h2M3 13.500h2M8 13.500h2M12 13.500h2" stroke="#f0e020" stroke-width="2"/></svg><svg style="position:absolute;left:112px;top:196px" width="18" height="17"><path d="M1 1h15v5h-4v5h4v5H1v-5h4V6H1z" fill="#7d8a80" stroke="#444" stroke-width=".7"/><path d="M3 3h2M8 3h2M12 3h2M3 13.500h2M8 13.500h2M12 13.500h2" stroke="#f0e020" stroke-width="2"/></svg><div style="position:absolute;left:165px;top:196px;width:79px;height:16px;background:#e1e1e1;border:1px solid #adadad;font-size:11px;line-height:14px;text-align:center">Сочетания...</div><div class="gb" style="left:4px;top:228px;width:76px;height:30px"></div><div class="gl" style="left:10px;top:222px">Вариант</div><div class="gb" style="left:85px;top:228px;width:114px;height:30px"></div><div class="gl" style="left:92px;top:222px">Сечение</div><div class="fw" style="left:18px;top:237px;width:23px;height:19px">1</div><div class="sp" style="left:42px;top:237px"></div><svg style="position:absolute;left:46px;top:241px" width="8" height="5"><path d="M1 4l3-3 3 3" fill="none" stroke="#aaa" stroke-width="1.1"/></svg><svg style="position:absolute;left:46px;top:249px" width="8" height="5"><path d="M1 1l3 3 3-3" fill="none" stroke="#aaa" stroke-width="1.1"/></svg><div class="fw" style="left:90px;top:237px;width:21px;height:19px">1</div><div class="sp" style="left:112px;top:237px;border-color:#adadad"></div><svg style="position:absolute;left:116px;top:241px" width="8" height="5"><path d="M1 4l3-3 3 3" fill="none" stroke="#222" stroke-width="1.1"/></svg><svg style="position:absolute;left:116px;top:249px" width="8" height="5"><path d="M1 1l3 3 3-3" fill="none" stroke="#222" stroke-width="1.1"/></svg><div class="cb" style="left:131px;top:241px"></div><div class="d" style="left:148px;top:240px;color:#000">Показать</div><div class="d" style="left:3px;top:264px;color:#000">АРМАТУРА продольная</div><div class="tb" style="left:1px;top:279px;width:244px;height:75px"><div class="th" style="left:1px;width:48px">Арма...</div><div class="th" style="left:49px;width:48px">AU1</div><div class="th" style="left:97px;width:48px">AU2</div><div class="th" style="left:145px;width:48px">AU3</div><div class="th" style="left:193px;width:48px">AU4</div><div class="d" style="left:7px;top:19px">ПЛН</div><div class="d" style="left:64px;top:19px">4.00</div><div class="d" style="left:112px;top:19px">4.00</div><div class="d" style="left:160px;top:19px">0.88</div><div class="d" style="left:208px;top:19px">0.88</div><div class="d" style="left:7px;top:36px">ПРЧН</div><div class="d" style="left:64px;top:36px">2.34</div><div class="d" style="left:112px;top:36px">2.34</div><div class="d" style="left:7px;top:53px">КР *</div></div><div class="tb" style="left:1px;top:353px;width:244px;height:75px"><div class="th" style="left:1px;width:40px">Ар...</div><div class="th" style="left:41px;width:40px">AS1</div><div class="th" style="left:81px;width:40px">AS2</div><div class="th" style="left:121px;width:40px">AS3</div><div class="th" style="left:161px;width:40px">AS4</div><div class="th" style="left:201px;width:40px">%</div><div class="d" style="left:7px;top:21px">ПЛН</div><div class="d" style="left:212px;top:21px">0.50</div><div class="d" style="left:7px;top:38px">ПРЧН</div><div class="d" style="left:212px;top:38px">0.24</div><div class="d" style="left:7px;top:55px">КР *</div></div><div style="position:absolute;left:2px;top:430px;width:248px;height:32px;border:1px solid;border-color:#696969 #a0a0a0 #a0a0a0 #696969;font-size:11px;line-height:13px;padding:2px 0 0 2px;white-space:pre"></div><div class="d" style="left:5px;top:467px;color:#000">АРМАТУРА поперечная</div><div class="d" style="left:143px;top:467px;color:#000">Ширина трещин</div><div class="tb" style="left:2px;top:485px;width:137px;height:74px"><div class="th" style="left:1px;width:45px">Шаг ...</div><div class="th" style="left:46px;width:44px">ASW1</div><div class="th" style="left:90px;width:44px">ASW2</div><div class="d" style="left:7px;top:20px">ПЛН</div><div class="d" style="left:57px;top:20px">2.78</div><div class="d" style="left:7px;top:37px">КР *</div></div><div class="tb" style="left:141px;top:485px;width:107px;height:74px"><div class="th" style="left:1px;width:51px">Кратк...</div><div class="th" style="left:52px;width:52px">Длит...</div><div class="d" style="left:7px;top:20px">0.29</div><div class="d" style="left:67px;top:20px">0.29</div></div></div></div>
<div class="abs" style="left:0;top:1109px;width:683px;height:27px;border-radius:0 0 4px 4px;background:linear-gradient(#d3d6dc,#b9bdc6 55%,#a6abb5)"></div>
<div class="abs" style="left:683px;top:1109px;width:10px;height:27px;border-radius:0 4px 4px 0;background:linear-gradient(#8b93a2,#6a7180)"></div>
<div class="abs" style="left:693px;top:1109px;width:240px;height:27px;border-radius:0 0 4px 4px;background:linear-gradient(#d3d6dc,#b9bdc6 55%,#a6abb5)"></div>
<div class="abs" style="left:933px;top:1109px;width:10px;height:27px;border-radius:0 4px 4px 0;background:linear-gradient(#8b93a2,#6a7180)"></div>
<div class="abs" style="left:0;top:1136px;width:1920px;height:24px;background:linear-gradient(#3c4250 0,#3a3e48 30%,#333 36%,#333 100%)"></div>
<div class="abs" style="left:1481px;top:1136px;width:439px;height:24px;background:linear-gradient(#a9aeb9,#8d939f);border-left:1px solid #ddd"></div>
<div class="abs" style="left:1489px;top:1139px;width:21px;height:19px;background:linear-gradient(#e6e8ec,#c9ccd4);border:1px solid #f4f4f4;box-sizing:border-box"></div>
<div class="abs" style="left:1512px;top:1139px;width:54px;height:19px;background:#fff;border:1px solid #888;box-sizing:border-box"></div>
<div class="t" style="left:1515px;top:1142px;font-size:11.5px">1.</div>
<svg class="abs" style="left:1555px;top:1147px" width="8" height="5"><path d="M0.5 0.5h7l-3.5 4z" fill="#444"/></svg>
<div class="t" style="left:1575px;top:1142px;font-size:11.5px;color:#111">Уз.: 0 / 4504</div>
<div class="t" style="left:1708px;top:1142px;font-size:11.5px;color:#111">Эл.: 0 / 4202</div>
<div class="t" style="left:1841px;top:1142px;font-size:11.5px;color:#111">Загр.: 1 / 2</div>
<div class="abs" style="left:1569px;top:1139px;width:1px;height:19px;background:#444;box-shadow:1px 0 0 #c8ccd4"></div>
<div class="abs" style="left:1703px;top:1139px;width:1px;height:19px;background:#444;box-shadow:1px 0 0 #c8ccd4"></div>
<div class="abs" style="left:1836px;top:1139px;width:1px;height:19px;background:#444;box-shadow:1px 0 0 #c8ccd4"></div>
<svg class="abs" style="left:0;top:1110px" width="960" height="26" viewBox="0 1110 960 26" font-family="Liberation Sans,sans-serif"><defs><radialGradient id="bb" cx=".5" cy=".35" r=".7"><stop offset="0" stop-color="#fff"/><stop offset=".7" stop-color="#e4ebf4"/><stop offset="1" stop-color="#8fb0d8"/></radialGradient></defs><path d="M5 1115v16" stroke="#222" stroke-width="2" stroke-dasharray="2 2"/><path d="M6.5 1116v16" stroke="#f4f4f4" stroke-width="1" stroke-dasharray="2 2"/><path d="M21 1116l2 4.500 5 .500-3.500 3.500 1 5-4.500-2.500-4.500 2.500 1-5-3.500-3.500 5-.500z" fill="none" stroke="#d88080" stroke-width="1" stroke-dasharray="1.500 1.200"/><circle cx="45" cy="1123" r="7.500" fill="url(#bb)" stroke="#9ab4d4" stroke-width=".8"/><path d="M45 1116v14M38 1123h14" stroke="#1f3f66" stroke-width="2"/><circle cx="45" cy="1123" r="3" fill="#8cc050" stroke="#4a8a2a" stroke-width=".6"/><path d="M58 1121.5h6l-3 3.500z" fill="#555"/><path d="M72.500 1117.500h13v7h-13zM72.500 1117.500v13M79 1117.500v13M85.500 1117.500v13" fill="none" stroke="#d82020" stroke-width="1.300"/><path d="M72.500 1117.500v13" stroke="#2a8a3a" stroke-width="1.300"/><path d="M72.500 1124.500v6M79 1124.500v6M85.500 1124.500v6" stroke="#1f3f8a" stroke-width="1.300"/><circle cx="72.5" cy="1117.5" r="1.600" fill="#fff" stroke="#3a9a3a" stroke-width="1"/><circle cx="79" cy="1117.5" r="1.600" fill="#fff" stroke="#d82020" stroke-width="1"/><circle cx="85.5" cy="1117.5" r="1.600" fill="#fff" stroke="#d82020" stroke-width="1"/><circle cx="72.5" cy="1124.5" r="1.600" fill="#fff" stroke="#3a9a3a" stroke-width="1"/><circle cx="79" cy="1124.5" r="1.600" fill="#fff" stroke="#d82020" stroke-width="1"/><circle cx="85.5" cy="1124.5" r="1.600" fill="#fff" stroke="#d82020" stroke-width="1"/><circle cx="101" cy="1123" r="7.500" fill="url(#bb)" stroke="#9ab4d4" stroke-width=".8"/><path d="M95 1123h12" stroke="#1f3f66" stroke-width="2"/><circle cx="95" cy="1123" r="2" fill="#8cc050" stroke="#4a8a2a" stroke-width=".5"/><circle cx="107" cy="1123" r="2" fill="#8cc050" stroke="#4a8a2a" stroke-width=".5"/><path d="M115 1121.5h6l-3 3.500z" fill="#555"/><circle cx="135" cy="1123" r="7.500" fill="url(#bb)" stroke="#9ab4d4" stroke-width=".8"/><path d="M132 1116.500v13M138 1116.500v13" stroke="#1f3f66" stroke-width="2.200"/><circle cx="157" cy="1123" r="7.500" fill="url(#bb)" stroke="#9ab4d4" stroke-width=".8"/><path d="M150.500 1120.500h13M150.500 1125.500h13" stroke="#1f3f66" stroke-width="2.200"/><circle cx="179" cy="1123" r="7.500" fill="url(#bb)" stroke="#9ab4d4" stroke-width=".8"/><path d="M179 1116v14M172 1123h14" stroke="#1f3f66" stroke-width="2"/><circle cx="179" cy="1123" r="3" fill="#8cc050" stroke="#4a8a2a" stroke-width=".6"/><circle cx="200" cy="1123" r="7.500" fill="url(#bb)" stroke="#9ab4d4" stroke-width=".8"/><path d="M197 1116v14M203 1116v14M193 1120h14M193 1126h14" stroke="#1f3f66" stroke-width="1.500"/><circle cx="222" cy="1123" r="7.500" fill="url(#bb)" stroke="#9ab4d4" stroke-width=".8"/><text x="216" y="1127.500" font-family="Liberation Serif,serif" font-weight="bold" font-size="11" fill="#333">EI</text><circle cx="246" cy="1123" r="7.500" fill="url(#bb)" stroke="#9ab4d4" stroke-width=".8"/><path d="M241 1117l10 11" stroke="#2a5f8c" stroke-width="3"/><path d="M246.500 1123l3 3.300" stroke="#e8d020" stroke-width="1.400"/><path d="M244.500 1121l2 2.200" stroke="#e03030" stroke-width="1.400"/><path d="M260 1121.5h6l-3 3.500z" fill="#555"/><path d="M272 1129l4-3h9l-4 4z" fill="#b3c878" stroke="#7a9440" stroke-width=".5"/><path d="M272 1129h9v2.500h-9z" fill="#95b058"/><path d="M272 1120l5-4v10l-5 3.500z" fill="#4a6db0" stroke="#1f3a7a" stroke-width=".7"/><rect x="281.500" y="1119" width="2.500" height="9" rx="1" fill="#d8205c"/><path d="M294 1116.500h15l-6 7v6l-3 1.500v-7.500z" fill="#f0f2f4" stroke="#556" stroke-width="1"/><rect x="317.500" y="1116.500" width="6" height="5" fill="#f4dde4" stroke="#d02050" stroke-width="1.200"/><rect x="317.500" y="1124.500" width="6" height="5" fill="#dde4f4" stroke="#2a4a9a" stroke-width="1.200"/><path d="M327 1118q3 5 0 10" fill="none" stroke="#2a7a4a" stroke-width="1.300"/><path d="M325 1119l2-2.500 2 2.500zM325 1127l2 2.500 2-2.500z" fill="#2a7a4a"/><path d="M340 1121h10v8h-10zM340 1125h10M345 1121v8" fill="none" stroke="#d02020" stroke-width="1.200"/><path d="M343 1119a4 4 0 0 1 8 0" fill="none" stroke="#d02020" stroke-width="2"/><circle cx="340" cy="1121" r="1.500" fill="#fff" stroke="#d02020"/><circle cx="350" cy="1129" r="1.500" fill="#fff" stroke="#d02020"/><path d="M366.500 1115h3v8h-3z" fill="#2a7a3a"/><path d="M364.500 1123h7v7l-1.200-2-1.200 2-1.100-2-1.200 2-1.100-2-1.200 2z" fill="#c8a860" stroke="#8a6a20" stroke-width=".5"/><path d="M382.500 1115v17" stroke="#7a808c"/><path d="M383.500 1115v17" stroke="#e4e6ea"/><path d="M392 1117h10M393.500 1117v13h7v-13M393.500 1124h7" fill="none" stroke="#d02050" stroke-width="1.300"/><path d="M391 1116l12 9M403 1116l-12 9" stroke="#2a8a3a" stroke-width="1.200"/><g opacity=".45"><path d="M414 1130v-12h5M419 1116h6v13h-6zM419 1122h6" fill="none" stroke="#5a7ab0" stroke-width="1.300"/><path d="M419 1116h6" stroke="#d06080" stroke-width="1.500"/></g><path d="M437.500 1116v14M446.500 1116v14M437.500 1120h9" fill="none" stroke="#2a3a8a" stroke-width="1.300"/><path d="M436 1124l12 7M448 1124l-12 7" stroke="#2a8a3a" stroke-width="1.200"/><path d="M437.500 1130h9" stroke="#d02050" stroke-width="1.300"/><g opacity=".45"><path d="M460 1121a5 5 0 1 1 2 6" fill="none" stroke="#5a7ab0" stroke-width="1.500"/><path d="M462 1130v-8h8v8" fill="none" stroke="#d06080" stroke-width="1.300"/></g><path d="M479 1130v-10l5-3h9v10M479 1120h9v10M488 1120l5-3M484 1117v10M479 1125h9M484 1123h9" fill="none" stroke="#3a4a6a" stroke-width="1.100"/><path d="M500 1130v-10l5-3h9v10M500 1120h9v10M509 1120l5-3M505 1117v10" fill="none" stroke="#3a4a6a" stroke-width="1.100"/><path d="M500 1123l5-3h9l-5 3zM500 1127l5-3h9l-5 3z" fill="#d83030" stroke="#a01818" stroke-width=".5"/><path d="M522.500 1115v17" stroke="#7a808c"/><path d="M523.500 1115v17" stroke="#e4e6ea"/><circle cx="536" cy="1121" r="4.500" fill="#e8f4fc" stroke="#8a9098" stroke-width="1.500"/><path d="M539.500 1124.500l4.500 5" stroke="#222" stroke-width="2.200"/><circle cx="558" cy="1121" r="4.500" fill="#e8f4fc" stroke="#8a9098" stroke-width="1.500"/><path d="M561.500 1124.500l4.500 5" stroke="#222" stroke-width="2.200"/><path d="M558 1120l7 7M565 1120l-7 7" stroke="#d82020" stroke-width="1.800"/><path d="M575.500 1115v17" stroke="#7a808c"/><path d="M576.500 1115v17" stroke="#e4e6ea"/><rect x="580.500" y="1112.500" width="20" height="21" rx="2" fill="#fbc058" stroke="#e8b050"/><path d="M584 1117l6 1 3 5-5 2-4-4z" fill="#c8ccd0" stroke="#555" stroke-width=".7"/><path d="M588 1125l5-2 3 7-3 1.500z" fill="#888" stroke="#444" stroke-width=".6"/><path d="M584 1117l-1 4 4 4" fill="#fff8c0" stroke="none"/><text x="611" y="1125" font-family="Liberation Serif,serif" font-style="italic" font-size="10" fill="#334">L</text><path d="M607 1129h15" stroke="#3a9a3a" stroke-width="1" stroke-dasharray="1 1.500"/><circle cx="607" cy="1129" r="1.300" fill="#3a9a3a"/><circle cx="622" cy="1129" r="1.300" fill="#3a9a3a"/><path d="M627 1121.5h6l-3 3.500z" fill="#555"/><path d="M640 1130l1.500-4.500 10-10 3 3-10 10z" fill="#f4c020" stroke="#a87800" stroke-width=".7"/><path d="M640 1130l1.500-4.500 3 3z" fill="#f4dcb0"/><path d="M651.500 1115.500l3 3" stroke="#e06060" stroke-width="2"/><path d="M662 1116l12 2-3 8-10-3z" fill="#d82828" stroke="#901010" stroke-width=".6"/><path d="M666 1130l1-3.500 7-7 2.500 2.500-7 7z" fill="#f4c020" stroke="#a87800" stroke-width=".6"/><path d="M686 1126h5M687 1128.500h3.500l-1.700 2z" stroke="#eee" fill="#eee" stroke-width="1"/><path d="M698 1115v16" stroke="#222" stroke-width="2" stroke-dasharray="2 2"/><path d="M699.5 1116v16" stroke="#f4f4f4" stroke-width="1" stroke-dasharray="2 2"/><path d="M707 1129v-13M705 1119.500l2-3.500 2 3.500" fill="none" stroke="#d02020" stroke-width="1.300"/><path d="M707 1129h13M716.500 1127l3.500 2-3.500 2" fill="none" stroke="#2a9a3a" stroke-width="1.300"/><path d="M707 1129l11-11M714.500 1118.500h3.500v3.500" fill="none" stroke="#3a3a9a" stroke-width="1.300"/><path d="M736 1128v-12M734 1119.500l2-3.500 2 3.500" fill="none" stroke="#d02020" stroke-width="1.300"/><path d="M736 1128l-7-3M730.500 1123.500l-2 1 1 3" fill="none" stroke="#3a3a9a" stroke-width="1.300"/><path d="M736 1128l8-4M741 1123l3.500.500-1 3" fill="none" stroke="#2a9a3a" stroke-width="1.300"/><defs><linearGradient id="hb" x1="0" y1="0" x2="0" y2="1"><stop offset="0" stop-color="#fdd79c"/><stop offset=".5" stop-color="#fbb64c"/><stop offset="1" stop-color="#fdd890"/></linearGradient></defs><rect x="748.500" y="1112.500" width="33" height="21" rx="2" fill="url(#hb)" stroke="#e8b050"/><path d="M755 1129V1116M753 1119l2-3.500 2 3.500" fill="none" stroke="#d02020" stroke-width="1.300"/><path d="M755 1129H768M765 1127l3.500 2-3.500 2" fill="none" stroke="#2a9a3a" stroke-width="1.300"/><circle cx="755" cy="1129" r="1.500" fill="#2a3a9a"/><text x="758" y="1125" font-size="8.500" fill="#223">XZ</text><path d="M773 1121.5h6l-3 3.500z" fill="#333"/><path d="M788 1129V1116M786 1119l2-3.500 2 3.500" fill="none" stroke="#2a3a9a" stroke-width="1.300"/><path d="M788 1129H801M798 1127l3.500 2-3.500 2" fill="none" stroke="#2a9a3a" stroke-width="1.300"/><circle cx="788" cy="1129" r="1.500" fill="#d02020"/><text x="791" y="1125" font-size="8.500" fill="#223">XY</text><path d="M808 1121.5h6l-3 3.500z" fill="#555"/><path d="M823 1129V1116M821 1119l2-3.500 2 3.500" fill="none" stroke="#d02020" stroke-width="1.300"/><path d="M823 1129H836M833 1127l3.500 2-3.500 2" fill="none" stroke="#2a3a9a" stroke-width="1.300"/><circle cx="823" cy="1129" r="1.500" fill="#2a9a3a"/><text x="826" y="1125" font-size="8.500" fill="#223">YZ</text><path d="M843 1121.5h6l-3 3.500z" fill="#555"/><path d="M855 1117h14l-3 12h-14z" fill="#dfe8f8" stroke="none"/><path d="M856 1128l5-9M861 1128l5-9M855 1124h12M857 1120.500h12" stroke="#3a4a6a" stroke-width="1.100" fill="none"/><path d="M892 1119a6 6 0 1 1-8-1" fill="none" stroke="#1f2f6a" stroke-width="2.400"/><path d="M880 1116h6v6z" fill="#1f2f6a"/><path d="M900 1121.5h6l-3 3.500z" fill="#555"/><path d="M913 1130v-14M911 1119.500l2-3.500 2 3.500M913 1130h14M923.500 1128l3.500 2-3.500 2M913 1130l10-10M919.500 1120h3.500v3.500" fill="none" stroke="#d02030" stroke-width="1.300"/><path d="M936 1126h5M937 1128.500h3.500l-1.700 2z" stroke="#eee" fill="#eee" stroke-width="1"/></svg><svg class="abs" style="left:1490px;top:1139px" width="20" height="19"><path d="M3.500 17L2 15.500 11 5l2 2z" fill="#f4c020" stroke="#a87800" stroke-width=".5"/><path d="M9 4q5-3.500 9 1l-1.500 1.500q-2.500-2-5 0z" fill="#aab" stroke="#667" stroke-width=".6"/></svg>
<svg class="abs" style="left:0;top:0" width="420" height="48" viewBox="0 0 420 48"><defs><linearGradient id="orb" x1="0" y1="0" x2="0" y2="1"><stop offset="0" stop-color="#fdfdfd"/><stop offset=".45" stop-color="#f0f0f0"/><stop offset=".55" stop-color="#cfcfcf"/><stop offset="1" stop-color="#f4f4f4"/></linearGradient></defs><circle cx="30.100" cy="23.400" r="18" fill="#fff" stroke="#3a3e46" stroke-width=".8"/><circle cx="30.100" cy="23.400" r="16.200" fill="url(#orb)"/><g fill="none" stroke="#4aa4c8" stroke-linecap="round"><circle cx="19" cy="17" r="3" stroke-width="1.700"/><path d="M22 17.500q3 0 4 3l-1 6q0 4 2 7" stroke-width="1.700"/><circle cx="40" cy="20" r="4.600" stroke-width="1.700"/><circle cx="40.500" cy="20.500" r="1.800" stroke-width="1.200"/><path d="M25.500 14.500L40 11.200M26.500 16.500L38 14" stroke-width="1.500"/><path d="M27 11v6" stroke-width="1.300"/><path d="M27.500 17v17M30.500 17v18M33.500 16.500v18M36.500 16v17" stroke-width="1.900"/><path d="M26.500 34.500l1 1.500 1.500-1.500 1.500 1.500 1.500-1.500 1.500 1.500 1.500-2 1.500 1" stroke-width="1.200"/></g><path d="M68.500 4.500h8l3.500 3.500v9h-11.500z" fill="#fdfdfd" stroke="#c8ccd2" stroke-width=".8"/><path d="M76.500 4.500v3.500h3.500" fill="#e8eaee" stroke="#c8ccd2" stroke-width=".6"/><path d="M88 9.5l3 3 3-3" fill="none" stroke="#e8ecf2" stroke-width="1.300"/><path d="M165 9.5l3 3 3-3" fill="none" stroke="#b8c2d2" stroke-width="1.300"/><path d="M198 9.5l3 3 3-3" fill="none" stroke="#b8c2d2" stroke-width="1.300"/><path d="M297 9.5l3 3 3-3" fill="none" stroke="#e8ecf2" stroke-width="1.300"/><rect x="102" y="4" width="13" height="9" fill="#eef2fa" stroke="#8a92b0" stroke-width=".6"/><rect x="102" y="4" width="13" height="2" fill="#a8a0d0"/><path d="M100.500 10h5l1 1.500h6v6.500h-12z" fill="#f4c858" stroke="#b88a20" stroke-width=".6"/><path d="M108 11V7.500h-2l3-3.500 3 3.500h-2V11z" fill="#2a3a9a"/><path d="M122.500 3.500h14v13h-14z" fill="#222" stroke="#000" stroke-width=".6"/><rect x="125" y="4" width="9" height="5.500" fill="#f4f4f4"/><rect x="126" y="12" width="7" height="4.500" fill="#555"/><rect x="127" y="13" width="2" height="3" fill="#ddd"/><path d="M146 9l5-5v3q8 0 8 9-2-5-8-4.500v3z" fill="#6f86b8" opacity=".7"/><path d="M192 9l-5-5v3q-8 0-8 9 2-5 8-4.500v3z" fill="#6f86b8" opacity=".7"/><path d="M211.500 5l10-1.500 4 1.500v11l-4 2-10-2z" fill="#8fb0bc" stroke="#3a5a66" stroke-width=".8"/><path d="M221.500 3.500v14.500M211.500 10l10 .500 4-1" fill="none" stroke="#3a5a66" stroke-width=".7"/><path d="M213 6.500l7-.800v8l-7-.500z" fill="#c4dce4"/><path d="M233 7l7 3.500v8l-7-4z" fill="#5a3ab0" stroke="#3a2080" stroke-width=".6"/><path d="M247.500 7l-7.500 3.500v8l7.500-4z" fill="#8a7ad0" stroke="#3a2080" stroke-width=".6"/><path d="M236 4.500l4 6-4-1z" fill="#4a2aa0"/><path d="M235 12l3 3.500" stroke="#f0c020" stroke-width="1.500"/><path d="M242 12h4M242 14.500h4" stroke="#dde" stroke-width=".8"/><rect x="255.500" y="6.500" width="13" height="10" rx="1" fill="#e4e6ea" stroke="#9a9ea6" stroke-width=".8"/><rect x="258" y="4.500" width="5" height="2.500" fill="#cfd2d8" stroke="#9a9ea6" stroke-width=".5"/><circle cx="261.500" cy="12" r="3" fill="#fff" stroke="#777" stroke-width=".8"/><circle cx="261.500" cy="12" r="1.300" fill="#222"/><path d="M284 3l6-1-2.500 6 3.500-.500-7 10 1.500-7-3.500 1z" fill="#f8d820" stroke="#c89a00" stroke-width=".6"/><path d="M278 10q0-3 1.500-3t1.500 2.500v3l4 1.500q1 4-1.500 4.500h-4q-3-2.500-3.500-6 1-1 2 .500z" fill="#f4d8a0" stroke="#a8803a" stroke-width=".7"/><path d="M309 16l5-3.500h11l-5 4.500z" fill="#b3c878" stroke="#7a9440" stroke-width=".5"/><path d="M309 16h11v2.500h-11z" fill="#95b058"/><path d="M309 7l6-4v10l-6 4z" fill="#4a6db0" stroke="#1f3a7a" stroke-width=".7"/><path d="M311 7.500v8M313.500 6v8" stroke="#e8eef8" stroke-width=".8"/><rect x="319.500" y="7" width="2.500" height="9" rx="1" fill="#d8205c"/><path d="M343.500 8h7" stroke="#b8c2d2" stroke-width="1.200"/><path d="M343.500 10.500h7l-3.500 3.500z" fill="#4a5466"/><path d="M343.500 11l3.500 3.500 3.500-3.500" fill="none" stroke="#c8d0dc" stroke-width=".8"/></svg>
</body></html>
